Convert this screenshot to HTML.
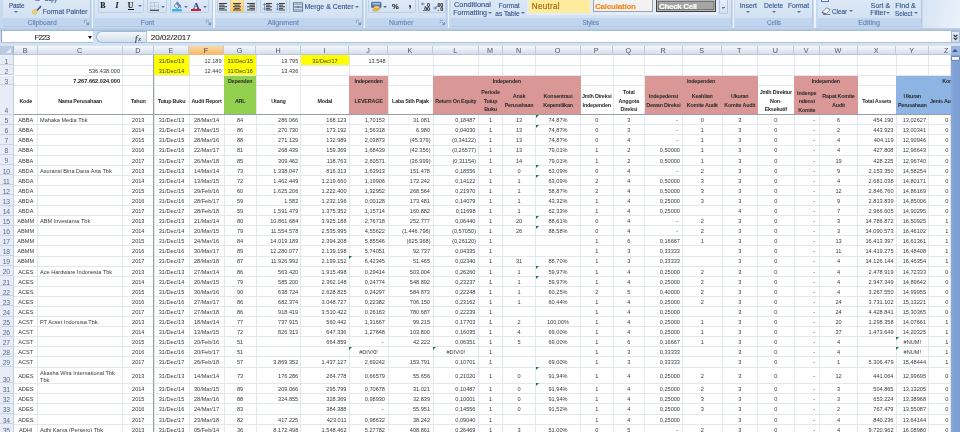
<!DOCTYPE html>
<html><head><meta charset="utf-8"><title>Excel</title>
<style>
html,body{margin:0;padding:0;background:#fff}
body{width:960px;height:432px;overflow:hidden;font-family:"Liberation Sans",sans-serif}
#app{position:relative;width:960px;height:432px;overflow:hidden;background:#fff}
#grid{position:absolute;left:0;top:0;width:960px;height:432px;overflow:hidden}
#grid>div{position:absolute}
.vl{top:55px;width:1px;height:380px;background:#e3e7ef}
.hl{left:14px;width:937px;height:1px;background:#e3e7ef}
.fz{background:#9a9ea6}
.t,.h{display:flex;align-items:center;font-size:5.6px;line-height:6px;color:#3a3a3a;white-space:nowrap;box-sizing:border-box;padding:0 2px 0 2px}
.t.c{justify-content:center}.t.l{justify-content:flex-start;padding-left:2.5px}.t.r{justify-content:flex-end;padding-right:2.5px}
.t.b{font-weight:bold;color:#222}
.t.wrap{white-space:normal;line-height:7.5px;padding-top:3px}
.h{align-items:center;justify-content:center;text-align:center;font-weight:bold;color:#2a2a2a;padding:1.8px 0 0 0;line-height:8.5px;font-size:5.4px;letter-spacing:-0.2px}
.tri{width:0;height:0;border-top:3.6px solid #1e7b34;border-right:3.6px solid transparent}
.chbar{left:0;background:linear-gradient(#f6f9fc,#e4eaf3 55%,#d6deeb);border-bottom:1px solid #b6c6dc;box-sizing:border-box}
.ch{display:flex;align-items:center;justify-content:center;font-size:7.2px;color:#4a5568;border-right:1px solid #bccadf;box-sizing:border-box}
.ch.sel{background:linear-gradient(#f9d9a6,#f3b765);color:#3a3a3a}
.corner{background:#b9cbe3;border-right:1px solid #9eb6ce;box-sizing:border-box}
.corner i{position:absolute;right:2px;bottom:2px;width:0;height:0;border-bottom:5px solid #e9eff7;border-left:5px solid transparent}
.rh{background:#e6edf7;border-right:1px solid #c0cee2;border-bottom:1px solid #c9d5e6;box-sizing:border-box;display:flex;align-items:flex-end;justify-content:center;font-size:6.8px;letter-spacing:-0.35px;line-height:6.2px;color:#5f6b82;padding-bottom:0;padding-right:0.5px}
#ribbon{position:absolute;left:0;top:0;width:960px;height:30.6px;overflow:hidden;background:linear-gradient(#c9dbf0,#c4d7ee 26.8px,#c6d8ee 27.2px,#b9cde7 29px,#a6bddb 30.6px)}
#ribbon:before{content:"";position:absolute;left:922.5px;top:0;width:38px;height:27.6px;background:linear-gradient(100deg,#d6e4f4,#ecf2fa)}
#ribbon>*, #fbar>*{position:absolute}
#fbar{position:absolute;left:0;top:0;width:960px;height:45.6px;}
#fbar:before{content:"";position:absolute;left:0;top:30.6px;width:960px;height:15px;background:linear-gradient(#c9dbf0,#d5e3f3)}
.grp{top:-3px;height:30px;box-sizing:border-box;border:1px solid #b4c9e5;border-left-color:#c9daef;border-radius:2.5px;background:linear-gradient(#dce8f5,#d3e2f3 20px);overflow:hidden}
.sep{top:0;width:1.4px;height:27.6px;background:linear-gradient(#f4f8fc,#eaf1fa)}
.gl{position:absolute;left:0;right:0;top:20.2px;bottom:0;background:#c1d6ee}
.rt{white-space:nowrap;display:block}
.ar{width:0;height:0;border-left:1.6px solid transparent;border-right:1.6px solid transparent;border-left-style:solid;border-right-style:solid;border-left-color:transparent;border-right-color:transparent}
.abs{position:absolute;overflow:visible}
.pill{left:95.5px;top:31.3px;width:50.5px;height:11.5px;border:1px solid #a3b8d6;border-right:none;border-radius:6px 0 0 6px;background:linear-gradient(#f3f7fc,#d2dfef);box-sizing:border-box}
.sb i{position:absolute;left:1.6px;top:3.6px;width:0;height:0;border-left:3px solid transparent;border-right:3px solid transparent;border-bottom:3px solid #3c5a92}
.rt{-webkit-text-stroke:0.12px currentColor}
#grid,#ribbon,#fbar{will-change:transform}
.t span{position:relative;top:0.4px}
.rh span{position:relative;top:0.5px}

</style></head><body>
<div id="app">
<div id="ribbon">
<div class="grp" style="left:2px;width:89px"><div class="gl"></div></div>
<span class="rt" style="left:27.60px;top:18.92px;font-size:6.82px;line-height:7.84px;letter-spacing:0.001px;color:#6183b8;">Clipboard</span>
<div class="sep" style="left:91.9px"></div>
<svg class="abs" style="left:84px;top:19.5px" width="5" height="5" viewBox="0 0 5 5"><path d="M0.3 3V0.3H3" fill="none" stroke="#7a93b8" stroke-width="0.7"/><path d="M2 2L4.4 4.4M4.6 2.4V4.6H2.4" fill="none" stroke="#5f7ba6" stroke-width="0.8"/></svg>
<div class="grp" style="left:94px;width:118.5px"><div class="gl"></div></div>
<span class="rt" style="left:140.80px;top:19.03px;font-size:6.7px;line-height:7.70px;letter-spacing:-0.002px;color:#6183b8;">Font</span>
<div class="sep" style="left:213.4px"></div>
<svg class="abs" style="left:205.5px;top:19.5px" width="5" height="5" viewBox="0 0 5 5"><path d="M0.3 3V0.3H3" fill="none" stroke="#7a93b8" stroke-width="0.7"/><path d="M2 2L4.4 4.4M4.6 2.4V4.6H2.4" fill="none" stroke="#5f7ba6" stroke-width="0.8"/></svg>
<div class="grp" style="left:214.5px;width:148.5px"><div class="gl"></div></div>
<span class="rt" style="left:267.50px;top:18.68px;font-size:7.08px;line-height:8.14px;letter-spacing:0.002px;color:#6183b8;">Alignment</span>
<div class="sep" style="left:363.9px"></div>
<svg class="abs" style="left:356px;top:19.5px" width="5" height="5" viewBox="0 0 5 5"><path d="M0.3 3V0.3H3" fill="none" stroke="#7a93b8" stroke-width="0.7"/><path d="M2 2L4.4 4.4M4.6 2.4V4.6H2.4" fill="none" stroke="#5f7ba6" stroke-width="0.8"/></svg>
<div class="grp" style="left:366px;width:81px"><div class="gl"></div></div>
<span class="rt" style="left:389.00px;top:18.91px;font-size:6.83px;line-height:7.85px;letter-spacing:0.002px;color:#6183b8;">Number</span>
<div class="sep" style="left:447.9px"></div>
<svg class="abs" style="left:440px;top:19.5px" width="5" height="5" viewBox="0 0 5 5"><path d="M0.3 3V0.3H3" fill="none" stroke="#7a93b8" stroke-width="0.7"/><path d="M2 2L4.4 4.4M4.6 2.4V4.6H2.4" fill="none" stroke="#5f7ba6" stroke-width="0.8"/></svg>
<div class="grp" style="left:450px;width:281.70000000000005px"><div class="gl"></div></div>
<span class="rt" style="left:582.50px;top:19.39px;font-size:6.3px;line-height:7.24px;letter-spacing:-0.131px;color:#6183b8;">Styles</span>
<div class="sep" style="left:732.6px"></div>
<div class="grp" style="left:734px;width:79.29999999999995px"><div class="gl"></div></div>
<span class="rt" style="left:767.00px;top:19.39px;font-size:6.3px;line-height:7.24px;letter-spacing:-0.001px;color:#6183b8;">Cells</span>
<div class="sep" style="left:814.1999999999999px"></div>
<div class="grp" style="left:816.5px;width:105.20000000000005px"><div class="gl"></div></div>
<span class="rt" style="left:858.30px;top:18.66px;font-size:7.1px;line-height:8.16px;letter-spacing:-0.002px;color:#6183b8;">Editing</span>
<span class="rt" style="left:8.90px;top:2.19px;font-size:6.3px;line-height:7.24px;letter-spacing:-0.127px;color:#35548a;">Paste</span>
<i class="ar" style="left:14.20px;top:10.60px;border-left-width:2.10px;border-right-width:2.10px;border-top:2.3px solid #56739f"></i>
<span class="rt" style="left:44.00px;top:-5.31px;font-size:6.3px;line-height:7.24px;letter-spacing:-0.402px;color:#35548a;">Copy</span>
<div style="left:35.00px;top:-1.00px;width:5.00px;height:2.20px;background:#6f8fc0;border-radius:0 0 1px 1px"></div>
<span class="rt" style="left:42.70px;top:7.66px;font-size:6.77px;line-height:7.79px;letter-spacing:0.002px;color:#35548a;">Format Painter</span>
<svg class="abs" style="left:31px;top:6px" width="11" height="9" viewBox="0 0 11 9"><path d="M9.6 0.6L6.2 4.2" stroke="#4a5f85" stroke-width="1.6" stroke-linecap="round"/><path d="M1.2 5.2L4.3 3.3L6.9 5.4L4.2 8.4Q2.2 8.3 1.2 5.2Z" fill="#f3d46b" stroke="#c9a437" stroke-width="0.5"/></svg>
<div style="left:97.50px;top:-2.00px;width:46.70px;height:14.60px;background:linear-gradient(#e1ebf7,#d3e1f2);border:1px solid #bdd0e9;border-radius:2px;box-sizing:border-box"></div>
<div style="left:147.00px;top:-2.00px;width:20.20px;height:14.60px;background:linear-gradient(#e1ebf7,#d3e1f2);border:1px solid #bdd0e9;border-radius:2px;box-sizing:border-box"></div>
<div style="left:170.00px;top:-2.00px;width:39.30px;height:14.60px;background:linear-gradient(#e1ebf7,#d3e1f2);border:1px solid #bdd0e9;border-radius:2px;box-sizing:border-box"></div>
<span class="rt" style="left:100.20px;top:1.88px;font-size:7.8px;line-height:8.97px;letter-spacing:0.597px;color:#1b1b1b;font-weight:bold;font-family:'Liberation Serif',serif;">B</span>
<span class="rt" style="left:115.50px;top:1.88px;font-size:7.8px;line-height:8.97px;letter-spacing:0.465px;color:#1b1b1b;font-weight:bold;font-style:italic;font-family:'Liberation Serif',serif;">I</span>
<span class="rt" style="left:127.80px;top:1.87px;font-size:7.6px;line-height:8.74px;letter-spacing:0.711px;color:#1b1b1b;font-weight:bold;font-family:'Liberation Serif',serif;">U</span>
<div style="left:127.80px;top:8.70px;width:6.40px;height:0.80px;background:#1b1b1b"></div>
<i class="ar" style="left:138.40px;top:4.90px;border-left-width:2.10px;border-right-width:2.10px;border-top:2.3px solid #56739f"></i>
<svg class="abs" style="left:149.5px;top:2px" width="9" height="9" viewBox="0 0 9 9"><path d="M0.5 0.5H8.5V8M0.5 0.5V8M4.5 0.5V8M0.5 4.2H8.5" fill="none" stroke="#8296b5" stroke-width="0.6" stroke-dasharray="1 0.8"/><path d="M0 8.3H9" stroke="#333" stroke-width="1.1"/></svg>
<i class="ar" style="left:161.20px;top:5.60px;border-left-width:2.10px;border-right-width:2.10px;border-top:2.3px solid #56739f"></i>
<svg class="abs" style="left:171.5px;top:0.5px" width="11" height="11" viewBox="0 0 11 11"><path d="M2 4.6L5.4 1.6L8.6 4.8L5.2 7.6Z" fill="#e9eff8" stroke="#50648c" stroke-width="0.8"/><path d="M5.4 1.6L8.6 4.8L6.8 6.3L4 3Z" fill="#6d87b8"/><path d="M8.5 4.6Q10 6.6 8.9 7.6Q7.6 6.8 8.5 4.6Z" fill="#3c6dbb"/><path d="M4.4 1.6Q5.2 -0.4 6.2 2.2" fill="none" stroke="#50648c" stroke-width="0.7"/><rect x="0.2" y="8.1" width="9.6" height="2.3" fill="#27b3e4"/></svg>
<i class="ar" style="left:183.90px;top:5.60px;border-left-width:2.10px;border-right-width:2.10px;border-top:2.3px solid #56739f"></i>
<span class="rt" style="left:193.00px;top:0.89px;font-size:9.0px;line-height:10.35px;letter-spacing:0.100px;color:#27468a;font-weight:bold;font-family:'Liberation Serif',serif;">A</span>
<div style="left:190.80px;top:8.80px;width:10.40px;height:2.00px;background:#d3222a"></div>
<i class="ar" style="left:203.40px;top:5.60px;border-left-width:2.10px;border-right-width:2.10px;border-top:2.3px solid #56739f"></i>
<div style="left:216.70px;top:-2.00px;width:40.30px;height:15.00px;background:linear-gradient(#e1ebf7,#d3e1f2);border:1px solid #bdd0e9;border-radius:2px;box-sizing:border-box"></div>
<div style="left:260.00px;top:-2.00px;width:26.70px;height:15.00px;background:linear-gradient(#e1ebf7,#d3e1f2);border:1px solid #bdd0e9;border-radius:2px;box-sizing:border-box"></div>
<div style="left:229.60px;top:-1.00px;width:14.40px;height:13.20px;background:linear-gradient(#fde3a6,#fbcb6e);border:1px solid #f3cd86;box-sizing:border-box"></div>
<svg class="abs" style="left:219.3px;top:3.1px" width="8.00" height="7.48" viewBox="0 0 8.00 7.48"><path d="M0.00 0.50H8.00M0.00 2.12H5.60M0.00 3.74H8.00M0.00 5.36H5.60M0.00 6.98H8.00" stroke="#3a3a3a" stroke-width="1.0" fill="none"/></svg>
<svg class="abs" style="left:232.8px;top:3.1px" width="8.00" height="7.48" viewBox="0 0 8.00 7.48"><path d="M0.00 0.50H8.00M1.20 2.12H6.80M0.00 3.74H8.00M1.20 5.36H6.80M0.00 6.98H8.00" stroke="#3a3a3a" stroke-width="1.0" fill="none"/></svg>
<svg class="abs" style="left:246.6px;top:3.1px" width="8.00" height="7.48" viewBox="0 0 8.00 7.48"><path d="M0.00 0.50H8.00M2.40 2.12H8.00M0.00 3.74H8.00M2.40 5.36H8.00M0.00 6.98H8.00" stroke="#3a3a3a" stroke-width="1.0" fill="none"/></svg>
<svg class="abs" style="left:265.7px;top:3.1px" width="6.00" height="7.48" viewBox="0 0 6.00 7.48"><path d="M0.00 0.50H6.00M0.00 2.12H4.20M0.00 3.74H6.00M0.00 5.36H4.20M0.00 6.98H6.00" stroke="#3a3a3a" stroke-width="1.0" fill="none"/></svg>
<svg class="abs" style="left:262.7px;top:2.8px" width="3.2" height="7.6" viewBox="0 0 3.2 7.6"><path d="M1.6 0.4V7.2" stroke="#4a72bd" stroke-width="0.8"/><path d="M0.3 2L1.6 0.4L2.9 2M0.3 5.6L1.6 7.2L2.9 5.6" fill="none" stroke="#4a72bd" stroke-width="0.7"/></svg>
<svg class="abs" style="left:278.59999999999997px;top:3.1px" width="6.00" height="7.48" viewBox="0 0 6.00 7.48"><path d="M0.00 0.50H6.00M0.00 2.12H4.20M0.00 3.74H6.00M0.00 5.36H4.20M0.00 6.98H6.00" stroke="#3a3a3a" stroke-width="1.0" fill="none"/></svg>
<svg class="abs" style="left:275.59999999999997px;top:2.8px" width="3.2" height="7.6" viewBox="0 0 3.2 7.6"><path d="M1.6 0.4V7.2" stroke="#4a72bd" stroke-width="0.8"/><path d="M0.3 2L1.6 0.4L2.9 2M0.3 5.6L1.6 7.2L2.9 5.6" fill="none" stroke="#4a72bd" stroke-width="0.7"/></svg>
<div style="left:289.30px;top:0.00px;width:0.70px;height:13.00px;background:#b9cbe4"></div>
<svg class="abs" style="left:292.5px;top:1.5px" width="10" height="10" viewBox="0 0 10 10"><rect x="0.4" y="0.8" width="9.2" height="8.4" fill="#d9e0ec" stroke="#5f7091" stroke-width="0.9"/><path d="M0.4 2.6H9.6M0.4 7.4H9.6M3.3 0.4V2.6M6.6 0.4V2.6M3.3 7.4V9.6M6.6 7.4V9.6" stroke="#7f90ae" stroke-width="0.6"/><path d="M1.2 5H4M8.8 5H6" stroke="#2f5bb0" stroke-width="1.1"/><text x="5" y="6.3" font-size="3.6" font-weight="bold" text-anchor="middle" fill="#333" font-family="Liberation Sans, sans-serif">a</text></svg>
<span class="rt" style="left:304.60px;top:3.11px;font-size:6.93px;line-height:7.97px;letter-spacing:-0.001px;color:#35548a;">Merge &amp; Center</span>
<i class="ar" style="left:355.20px;top:5.60px;border-left-width:2.10px;border-right-width:2.10px;border-top:2.3px solid #56739f"></i>
<div style="left:368.30px;top:-2.00px;width:47.70px;height:14.60px;background:linear-gradient(#e1ebf7,#d3e1f2);border:1px solid #bdd0e9;border-radius:2px;box-sizing:border-box"></div>
<div style="left:418.30px;top:-2.00px;width:27.70px;height:14.60px;background:linear-gradient(#e1ebf7,#d3e1f2);border:1px solid #bdd0e9;border-radius:2px;box-sizing:border-box"></div>
<svg class="abs" style="left:370.5px;top:0.5px" width="11" height="11" viewBox="0 0 11 11"><rect x="0.6" y="1.2" width="9.4" height="5.4" rx="0.5" fill="#5b7bb4" stroke="#3c598f" stroke-width="0.7"/><rect x="1.6" y="2.3" width="7.4" height="1.1" fill="#cfdcf0"/><ellipse cx="6.2" cy="7.7" rx="3" ry="1.3" fill="#f1c644" stroke="#b48a1e" stroke-width="0.4"/><ellipse cx="5.6" cy="6.4" rx="3" ry="1.3" fill="#f6d566" stroke="#b48a1e" stroke-width="0.4"/><ellipse cx="4.2" cy="9" rx="2.6" ry="1.2" fill="#f1c644" stroke="#b48a1e" stroke-width="0.4"/></svg>
<i class="ar" style="left:382.90px;top:5.60px;border-left-width:2.10px;border-right-width:2.10px;border-top:2.3px solid #56739f"></i>
<span class="rt" style="left:392.00px;top:3.30px;font-size:7.6px;line-height:8.74px;letter-spacing:0.542px;color:#2b2b2b;font-weight:bold;">%</span>
<span class="rt" style="left:408.40px;top:-2.64px;font-size:11px;line-height:12.65px;letter-spacing:-0.656px;color:#222;font-weight:bold;">,</span>
<span class="rt" style="left:424.40px;top:1.82px;font-size:5.3px;line-height:6.09px;letter-spacing:1.180px;color:#222;font-weight:bold;">.0</span>
<span class="rt" style="left:423.00px;top:6.22px;font-size:5.3px;line-height:6.09px;letter-spacing:-0.184px;color:#222;font-weight:bold;">.00</span>
<svg class="abs" style="left:420.8px;top:1.6px" width="4" height="4" viewBox="0 0 4 4"><path d="M3.6 2H0.8M2 0.6L0.6 2L2 3.4" fill="none" stroke="#2f62c0" stroke-width="0.8"/></svg>
<span class="rt" style="left:436.20px;top:1.82px;font-size:5.3px;line-height:6.09px;letter-spacing:-0.184px;color:#222;font-weight:bold;">.00</span>
<span class="rt" style="left:437.60px;top:6.22px;font-size:5.3px;line-height:6.09px;letter-spacing:1.180px;color:#222;font-weight:bold;">.0</span>
<svg class="abs" style="left:433.4px;top:6.2px" width="4" height="4" viewBox="0 0 4 4"><path d="M0.4 2H3.2M2 0.6L3.4 2L2 3.4" fill="none" stroke="#2f62c0" stroke-width="0.8"/></svg>
<span class="rt" style="left:454.00px;top:1.09px;font-size:7.39px;line-height:8.50px;letter-spacing:0.002px;color:#35548a;">Conditional</span>
<span class="rt" style="left:453.30px;top:9.10px;font-size:7.05px;line-height:8.11px;letter-spacing:0.001px;color:#35548a;">Formatting</span>
<i class="ar" style="left:488.40px;top:11.60px;border-left-width:2.10px;border-right-width:2.10px;border-top:2.3px solid #56739f"></i>
<span class="rt" style="left:498.70px;top:1.79px;font-size:6.63px;line-height:7.62px;letter-spacing:0.001px;color:#35548a;">Format</span>
<span class="rt" style="left:495.30px;top:9.54px;font-size:6.58px;line-height:7.57px;letter-spacing:0.002px;color:#35548a;">as Table</span>
<i class="ar" style="left:520.50px;top:11.60px;border-left-width:2.10px;border-right-width:2.10px;border-top:2.3px solid #56739f"></i>
<div style="left:526.50px;top:-1.00px;width:191.50px;height:15.50px;background:#e3ecf8;"></div>
<div style="left:529.00px;top:-1.00px;width:60.60px;height:13.50px;background:#ffeb9c"></div>
<span class="rt" style="left:531.80px;top:1.74px;font-size:8.2px;line-height:9.43px;letter-spacing:0.244px;color:#9c6500;">Neutral</span>
<div style="left:592.50px;top:-1.00px;width:60.30px;height:13.40px;background:#f2f2f2;border:1px solid #a0a0a0;box-sizing:border-box"></div>
<span class="rt" style="left:595.00px;top:1.93px;font-size:8.0px;line-height:9.20px;letter-spacing:-0.212px;color:#f6861a;font-weight:bold;">Calculation</span>
<div style="left:656.30px;top:-1.00px;width:59.70px;height:13.20px;background:#a5a5a5;border:1px solid #3f3f3f;box-shadow:inset 0 0 0 0.7px #d8d8d8, inset 0 0 0 1.4px #4a4a4a;box-sizing:border-box"></div>
<span class="rt" style="left:659.00px;top:1.93px;font-size:8.0px;line-height:9.20px;letter-spacing:-0.323px;color:#ffffff;font-weight:bold;">Check Cell</span>
<div style="left:719.00px;top:-1.00px;width:8.60px;height:15.20px;background:linear-gradient(#e6eef9,#d3e1f3);border:1px solid #b3c8e4;border-radius:0 0 2px 0;box-sizing:border-box"></div>
<div style="left:721.60px;top:6.60px;width:3.40px;height:0.70px;background:#5d79a6"></div>
<i class="ar" style="left:721.60px;top:8.30px;border-left-width:1.70px;border-right-width:1.70px;border-top:1.8px solid #56739f"></i>
<span class="rt" style="left:739.70px;top:1.82px;font-size:6.92px;line-height:7.96px;letter-spacing:-0.001px;color:#35548a;">Insert</span>
<i class="ar" style="left:746.20px;top:11.20px;border-left-width:2.10px;border-right-width:2.10px;border-top:2.3px solid #56739f"></i>
<span class="rt" style="left:764.00px;top:2.04px;font-size:6.68px;line-height:7.68px;letter-spacing:-0.002px;color:#35548a;">Delete</span>
<i class="ar" style="left:771.50px;top:11.20px;border-left-width:2.10px;border-right-width:2.10px;border-top:2.3px solid #56739f"></i>
<span class="rt" style="left:788.00px;top:2.09px;font-size:6.63px;line-height:7.62px;letter-spacing:0.001px;color:#35548a;">Format</span>
<i class="ar" style="left:796.90px;top:11.20px;border-left-width:2.10px;border-right-width:2.10px;border-top:2.3px solid #56739f"></i>
<div style="left:821.00px;top:-1.00px;width:8.00px;height:3.00px;background:#f1f5fb;border:1px solid #5873a3;box-sizing:border-box"></div>
<svg class="abs" style="left:820.5px;top:6.5px" width="11" height="8" viewBox="0 0 11 8"><path d="M1 5.4L5.6 0.8L9.2 2.6L5 6.8Z" fill="#fafcff" stroke="#4b4f66" stroke-width="0.7"/><path d="M1 5.4L2.8 7H5L5 6.8Z" fill="#d9a0b0" stroke="#4b4f66" stroke-width="0.5"/><path d="M2 7.5H9.5" stroke="#55597a" stroke-width="0.7"/></svg>
<span class="rt" style="left:832.00px;top:8.09px;font-size:6.3px;line-height:7.24px;letter-spacing:-0.014px;color:#35548a;">Clear</span>
<i class="ar" style="left:848.90px;top:10.00px;border-left-width:2.10px;border-right-width:2.10px;border-top:2.3px solid #56739f"></i>
<span class="rt" style="left:870.80px;top:1.83px;font-size:6.91px;line-height:7.95px;letter-spacing:-0.000px;color:#35548a;">Sort &amp;</span>
<span class="rt" style="left:870.30px;top:9.17px;font-size:6.98px;line-height:8.03px;letter-spacing:-0.002px;color:#35548a;">Filter</span>
<i class="ar" style="left:886.30px;top:11.60px;border-left-width:2.10px;border-right-width:2.10px;border-top:2.3px solid #56739f"></i>
<span class="rt" style="left:895.30px;top:1.67px;font-size:7.09px;line-height:8.15px;letter-spacing:0.002px;color:#35548a;">Find &amp;</span>
<span class="rt" style="left:895.00px;top:9.79px;font-size:6.3px;line-height:7.24px;letter-spacing:-0.002px;color:#35548a;">Select</span>
<i class="ar" style="left:913.50px;top:11.60px;border-left-width:2.10px;border-right-width:2.10px;border-top:2.3px solid #56739f"></i>
</div>
<div id="fbar">
<div style="left:0.50px;top:30.80px;width:92.50px;height:12.40px;background:#fff;border-left:0.8px solid #97a6bd;border-bottom:0.7px solid #b3c1d6;box-sizing:border-box"></div>
<span class="rt" style="left:34.40px;top:33.71px;font-size:7.8px;line-height:8.97px;letter-spacing:-0.726px;color:#2b2b2b;">F223</span>
<i class="ar" style="left:87.50px;top:35.90px;border-left-width:2.50px;border-right-width:2.50px;border-top:3px solid #111"></i>
<div class="pill"></div>
<div style="left:100.00px;top:35.40px;width:3.00px;height:2.80px;border-radius:50%;background:radial-gradient(circle at 40% 35%,#ffffff,#c3cfe0 70%,#9fb0c9);"></div>
<span class="rt" style="left:135.00px;top:32.51px;font-size:9.2px;line-height:10.58px;letter-spacing:0.444px;color:#3a3a3a;font-style:italic;font-family:'Liberation Serif',serif;">f</span>
<span class="rt" style="left:138.20px;top:35.82px;font-size:6.0px;line-height:6.90px;letter-spacing:0.337px;color:#3a3a3a;font-style:italic;font-family:'Liberation Serif',serif;">x</span>
<div style="left:146.00px;top:30.80px;width:804.60px;height:12.40px;background:#fff;border-left:1px solid #b4c6de;border-bottom:0.7px solid #b3c1d6;box-sizing:border-box"></div>
<span class="rt" style="left:150.80px;top:33.44px;font-size:8.1px;line-height:9.31px;letter-spacing:-0.060px;color:#2b2b2b;">20/02/2017</span>
<div style="left:950.60px;top:30.90px;width:9.40px;height:12.30px;background:linear-gradient(#e3ecf8,#cfdef0);border:1px solid #a5bad6;box-sizing:border-box"></div>
<svg class="abs" style="left:953px;top:34px" width="5" height="7" viewBox="0 0 5 7"><path d="M0.6 0.8L2.5 2.7L4.4 0.8M0.6 3.6L2.5 5.5L4.4 3.6" fill="none" stroke="#2a2a2a" stroke-width="1.05"/></svg>
</div>
<div id="grid">
<div class="vl" style="left:37.00px"></div>
<div class="vl" style="left:122.00px"></div>
<div class="vl" style="left:153.50px"></div>
<div class="vl" style="left:188.50px"></div>
<div class="vl" style="left:223.50px"></div>
<div class="vl" style="left:255.75px"></div>
<div class="vl" style="left:300.25px"></div>
<div class="vl" style="left:348.50px"></div>
<div class="vl" style="left:387.50px"></div>
<div class="vl" style="left:432.50px"></div>
<div class="vl" style="left:478.00px"></div>
<div class="vl" style="left:502.00px"></div>
<div class="vl" style="left:535.00px"></div>
<div class="vl" style="left:580.00px"></div>
<div class="vl" style="left:612.50px"></div>
<div class="vl" style="left:644.00px"></div>
<div class="vl" style="left:682.00px"></div>
<div class="vl" style="left:721.50px"></div>
<div class="vl" style="left:757.00px"></div>
<div class="vl" style="left:793.50px"></div>
<div class="vl" style="left:819.00px"></div>
<div class="vl" style="left:857.00px"></div>
<div class="vl" style="left:895.50px"></div>
<div class="vl" style="left:928.00px"></div>
<div class="vl" style="left:950.30px"></div>
<div class="hl" style="top:64.90px"></div>
<div class="hl" style="top:75.00px"></div>
<div class="hl" style="top:84.90px"></div>
<div class="hl" style="top:114.25px"></div>
<div class="hl" style="top:124.34px"></div>
<div class="hl" style="top:134.43px"></div>
<div class="hl" style="top:144.52px"></div>
<div class="hl" style="top:154.61px"></div>
<div class="hl" style="top:164.70px"></div>
<div class="hl" style="top:174.79px"></div>
<div class="hl" style="top:184.88px"></div>
<div class="hl" style="top:194.97px"></div>
<div class="hl" style="top:205.06px"></div>
<div class="hl" style="top:215.15px"></div>
<div class="hl" style="top:225.24px"></div>
<div class="hl" style="top:235.33px"></div>
<div class="hl" style="top:245.42px"></div>
<div class="hl" style="top:255.51px"></div>
<div class="hl" style="top:265.60px"></div>
<div class="hl" style="top:275.69px"></div>
<div class="hl" style="top:285.78px"></div>
<div class="hl" style="top:295.87px"></div>
<div class="hl" style="top:305.96px"></div>
<div class="hl" style="top:316.05px"></div>
<div class="hl" style="top:326.14px"></div>
<div class="hl" style="top:336.23px"></div>
<div class="hl" style="top:346.32px"></div>
<div class="hl" style="top:356.41px"></div>
<div class="hl" style="top:366.50px"></div>
<div class="hl" style="top:382.80px"></div>
<div class="hl" style="top:393.07px"></div>
<div class="hl" style="top:403.34px"></div>
<div class="hl" style="top:413.61px"></div>
<div class="hl" style="top:423.88px"></div>
<div class="f" style="left:154.00px;top:55.10px;width:35.00px;height:20.40px;background:#ffff00;"></div>
<div class="f" style="left:224.00px;top:55.10px;width:32.25px;height:20.40px;background:#ffff00;"></div>
<div class="f" style="left:300.75px;top:55.10px;width:48.25px;height:10.30px;background:#ffff00;"></div>
<div class="f" style="left:224.00px;top:75.50px;width:32.25px;height:39.25px;background:#92d050;"></div>
<div class="f" style="left:349.00px;top:75.50px;width:39.00px;height:39.25px;background:#d99795;"></div>
<div class="f" style="left:433.00px;top:75.50px;width:147.50px;height:39.25px;background:#d99795;"></div>
<div class="f" style="left:644.50px;top:75.50px;width:113.00px;height:39.25px;background:#d99795;"></div>
<div class="f" style="left:794.00px;top:75.50px;width:63.50px;height:39.25px;background:#d99795;"></div>
<div class="f" style="left:896.00px;top:75.50px;width:54.80px;height:39.25px;background:#8db4e3;"></div>
<div class="fz" style="left:153.40px;top:55.10px;width:1px;height:400px"></div>
<div class="fz" style="left:0;top:114.15px;width:950.80px;height:1px"></div>
<div class="t c" style="left:154.00px;top:55.10px;width:35.00px;height:10.30px;"><span>31/Dec/13</span></div>
<div class="t r" style="left:189.00px;top:55.10px;width:35.00px;height:10.30px;"><span>12.189</span></div>
<div class="t c" style="left:224.00px;top:55.10px;width:32.25px;height:10.30px;"><span>31/Dec/15</span></div>
<div class="t r" style="left:256.25px;top:55.10px;width:44.50px;height:10.30px;"><span>13.795</span></div>
<div class="t c" style="left:300.75px;top:55.10px;width:48.25px;height:10.30px;"><span>31/Dec/17</span></div>
<div class="t r" style="left:349.00px;top:55.10px;width:39.00px;height:10.30px;"><span>13.548</span></div>
<div class="t c" style="left:154.00px;top:65.40px;width:35.00px;height:10.10px;"><span>31/Dec/14</span></div>
<div class="t r" style="left:189.00px;top:65.40px;width:35.00px;height:10.10px;"><span>12.440</span></div>
<div class="t c" style="left:224.00px;top:65.40px;width:32.25px;height:10.10px;"><span>31/Dec/16</span></div>
<div class="t r" style="left:256.25px;top:65.40px;width:44.50px;height:10.10px;"><span>13.436</span></div>
<div class="t r" style="left:37.50px;top:65.40px;width:85.00px;height:10.10px;"><span>536.438.000</span></div>
<div class="t b r" style="left:37.50px;top:75.50px;width:85.00px;height:9.90px;"><span>7.267.662.024.000</span></div>
<div class="h" style="left:224.00px;top:75.50px;width:32.25px;height:9.90px;"><span>Dependen</span></div>
<div class="h" style="left:349.00px;top:75.50px;width:39.00px;height:9.90px;"><span>Independen</span></div>
<div class="h" style="left:433.00px;top:75.50px;width:147.50px;height:9.90px;"><span>Independen</span></div>
<div class="h" style="left:644.50px;top:75.50px;width:113.00px;height:9.90px;"><span>Independen</span></div>
<div class="h" style="left:794.00px;top:75.50px;width:63.50px;height:9.90px;"><span>Independen</span></div>
<div class="h" style="left:926.50px;top:75.50px;width:24.30px;height:9.90px;justify-content:flex-end;overflow:hidden"><span style="margin-right:-3px">Kont</span></div>
<div class="h" style="left:14.00px;top:85.40px;width:23.50px;height:29.35px;overflow:hidden;"><span>Kode</span></div>
<div class="h" style="left:37.50px;top:85.40px;width:85.00px;height:29.35px;overflow:hidden;"><span>Nama Perusahaan</span></div>
<div class="h" style="left:122.50px;top:85.40px;width:31.50px;height:29.35px;overflow:hidden;"><span>Tahun</span></div>
<div class="h" style="left:154.00px;top:85.40px;width:35.00px;height:29.35px;overflow:hidden;"><span>Tutup Buku</span></div>
<div class="h" style="left:189.00px;top:85.40px;width:35.00px;height:29.35px;overflow:hidden;"><span>Audit Report</span></div>
<div class="h" style="left:224.00px;top:85.40px;width:32.25px;height:29.35px;overflow:hidden;"><span>ARL</span></div>
<div class="h" style="left:256.25px;top:85.40px;width:44.50px;height:29.35px;overflow:hidden;"><span>Utang</span></div>
<div class="h" style="left:300.75px;top:85.40px;width:48.25px;height:29.35px;overflow:hidden;"><span>Modal</span></div>
<div class="h" style="left:349.00px;top:85.40px;width:39.00px;height:29.35px;overflow:hidden;"><span>LEVERAGE</span></div>
<div class="h" style="left:388.00px;top:85.40px;width:45.00px;height:29.35px;overflow:hidden;"><span>Laba Stlh Pajak</span></div>
<div class="h" style="left:433.00px;top:85.40px;width:45.50px;height:29.35px;overflow:hidden;"><span>Return On Equity</span></div>
<div class="h" style="left:478.50px;top:85.40px;width:24.00px;height:29.35px;overflow:hidden;"><span>Periode<br>Tutup<br>Buku</span></div>
<div class="h" style="left:502.50px;top:85.40px;width:33.00px;height:29.35px;overflow:hidden;"><span>Anak<br>Perusahaan</span></div>
<div class="h" style="left:535.50px;top:85.40px;width:45.00px;height:29.35px;overflow:hidden;"><span>Konsentrasi<br>Kepemilikan</span></div>
<div class="h" style="left:580.50px;top:85.40px;width:32.50px;height:29.35px;overflow:hidden;"><span>Jmlh Direksi<br>Independen</span></div>
<div class="h" style="left:613.00px;top:85.40px;width:31.50px;height:29.35px;overflow:hidden;"><span>Total<br>Anggota<br>Direksi</span></div>
<div class="h" style="left:644.50px;top:85.40px;width:38.00px;height:29.35px;overflow:hidden;"><span>Indepedensi<br>Dewan Direksi</span></div>
<div class="h" style="left:682.50px;top:85.40px;width:39.50px;height:29.35px;overflow:hidden;"><span>Keahlian<br>Komite Audit</span></div>
<div class="h" style="left:722.00px;top:85.40px;width:35.50px;height:29.35px;overflow:hidden;"><span>Ukuran<br>Komite Audit</span></div>
<div class="h" style="left:757.50px;top:85.40px;width:36.50px;height:29.35px;overflow:hidden;"><span>Jmlh Direktur<br>Non-<br>Eksekutif</span></div>
<div class="h" style="left:794.00px;top:85.40px;width:25.50px;height:29.35px;overflow:hidden;align-items:flex-start;padding-top:3.6px;box-sizing:border-box;"><span>Indenpe<br>ndensi<br>Komite<br>Audit</span></div>
<div class="h" style="left:819.50px;top:85.40px;width:38.00px;height:29.35px;overflow:hidden;"><span>Rapat Komite<br>Audit</span></div>
<div class="h" style="left:857.50px;top:85.40px;width:38.50px;height:29.35px;overflow:hidden;"><span>Total Assets</span></div>
<div class="h" style="left:896.00px;top:85.40px;width:32.50px;height:29.35px;overflow:hidden;"><span>Ukuran<br>Perusahaan</span></div>
<div class="h" style="left:928.50px;top:85.40px;width:22.30px;height:29.35px;justify-content:flex-start;overflow:hidden"><span style="white-space:nowrap;margin-left:1.5px">Jenis Au</span></div>
<div class="t c" style="left:14.00px;top:114.75px;width:23.50px;height:10.09px;"><span>ABBA</span></div>
<div class="t l" style="left:37.50px;top:114.75px;width:85.00px;height:10.09px;"><span>Mahaka Media Tbk</span></div>
<div class="t c" style="left:122.50px;top:114.75px;width:31.50px;height:10.09px;"><span>2013</span></div>
<div class="t c" style="left:154.00px;top:114.75px;width:35.00px;height:10.09px;"><span>31/Dec/13</span></div>
<div class="t c" style="left:189.00px;top:114.75px;width:35.00px;height:10.09px;"><span>28/Mar/14</span></div>
<div class="t c" style="left:224.00px;top:114.75px;width:32.25px;height:10.09px;"><span>84</span></div>
<div class="t r" style="left:256.25px;top:114.75px;width:44.50px;height:10.09px;"><span>286.066</span></div>
<div class="t r" style="left:300.75px;top:114.75px;width:48.25px;height:10.09px;"><span>168.123</span></div>
<div class="t r" style="left:349.00px;top:114.75px;width:39.00px;height:10.09px;padding-right:3px;"><span>1,70153</span></div>
<div class="t r" style="left:388.00px;top:114.75px;width:45.00px;height:10.09px;padding-right:3px;"><span>31.081</span></div>
<div class="t r" style="left:433.00px;top:114.75px;width:45.50px;height:10.09px;padding-right:3px;"><span>0,18487</span></div>
<div class="t c" style="left:478.50px;top:114.75px;width:24.00px;height:10.09px;"><span>1</span></div>
<div class="t c" style="left:502.50px;top:114.75px;width:33.00px;height:10.09px;"><span>13</span></div>
<div class="t c" style="left:535.50px;top:114.75px;width:45.00px;height:10.09px;"><span>74,87%</span></div>
<div class="t c" style="left:580.50px;top:114.75px;width:32.50px;height:10.09px;"><span>0</span></div>
<div class="t c" style="left:613.00px;top:114.75px;width:31.50px;height:10.09px;"><span>3</span></div>
<div class="t r" style="left:644.50px;top:114.75px;width:38.00px;height:10.09px;padding-right:4.5px;"><span>-</span></div>
<div class="t c" style="left:682.50px;top:114.75px;width:39.50px;height:10.09px;"><span>0</span></div>
<div class="t c" style="left:722.00px;top:114.75px;width:35.50px;height:10.09px;"><span>3</span></div>
<div class="t c" style="left:757.50px;top:114.75px;width:36.50px;height:10.09px;"><span>0</span></div>
<div class="t r" style="left:794.00px;top:114.75px;width:25.50px;height:10.09px;padding-right:4.5px;"><span>-</span></div>
<div class="t c" style="left:819.50px;top:114.75px;width:38.00px;height:10.09px;"><span>6</span></div>
<div class="t r" style="left:857.50px;top:114.75px;width:38.50px;height:10.09px;"><span>454.190</span></div>
<div class="t r" style="left:896.00px;top:114.75px;width:32.50px;height:10.09px;"><span>13,02627</span></div>
<div class="t r" style="left:928.50px;top:114.75px;width:22.30px;height:10.09px;"><span>0</span></div>
<div class="t c" style="left:14.00px;top:124.84px;width:23.50px;height:10.09px;"><span>ABBA</span></div>
<div class="t c" style="left:122.50px;top:124.84px;width:31.50px;height:10.09px;"><span>2014</span></div>
<div class="t c" style="left:154.00px;top:124.84px;width:35.00px;height:10.09px;"><span>31/Dec/14</span></div>
<div class="t c" style="left:189.00px;top:124.84px;width:35.00px;height:10.09px;"><span>27/Mar/15</span></div>
<div class="t c" style="left:224.00px;top:124.84px;width:32.25px;height:10.09px;"><span>86</span></div>
<div class="t r" style="left:256.25px;top:124.84px;width:44.50px;height:10.09px;"><span>270.730</span></div>
<div class="t r" style="left:300.75px;top:124.84px;width:48.25px;height:10.09px;"><span>173.192</span></div>
<div class="t r" style="left:349.00px;top:124.84px;width:39.00px;height:10.09px;padding-right:3px;"><span>1,56318</span></div>
<div class="t r" style="left:388.00px;top:124.84px;width:45.00px;height:10.09px;padding-right:3px;"><span>6.980</span></div>
<div class="t r" style="left:433.00px;top:124.84px;width:45.50px;height:10.09px;padding-right:3px;"><span>0,04030</span></div>
<div class="t c" style="left:478.50px;top:124.84px;width:24.00px;height:10.09px;"><span>1</span></div>
<div class="t c" style="left:502.50px;top:124.84px;width:33.00px;height:10.09px;"><span>13</span></div>
<div class="t c" style="left:535.50px;top:124.84px;width:45.00px;height:10.09px;"><span>74,87%</span></div>
<div class="t c" style="left:580.50px;top:124.84px;width:32.50px;height:10.09px;"><span>0</span></div>
<div class="t c" style="left:613.00px;top:124.84px;width:31.50px;height:10.09px;"><span>3</span></div>
<div class="t r" style="left:644.50px;top:124.84px;width:38.00px;height:10.09px;padding-right:4.5px;"><span>-</span></div>
<div class="t c" style="left:682.50px;top:124.84px;width:39.50px;height:10.09px;"><span>1</span></div>
<div class="t c" style="left:722.00px;top:124.84px;width:35.50px;height:10.09px;"><span>3</span></div>
<div class="t c" style="left:757.50px;top:124.84px;width:36.50px;height:10.09px;"><span>0</span></div>
<div class="t r" style="left:794.00px;top:124.84px;width:25.50px;height:10.09px;padding-right:4.5px;"><span>-</span></div>
<div class="t c" style="left:819.50px;top:124.84px;width:38.00px;height:10.09px;"><span>2</span></div>
<div class="t r" style="left:857.50px;top:124.84px;width:38.50px;height:10.09px;"><span>443.923</span></div>
<div class="t r" style="left:896.00px;top:124.84px;width:32.50px;height:10.09px;"><span>13,00341</span></div>
<div class="t r" style="left:928.50px;top:124.84px;width:22.30px;height:10.09px;"><span>0</span></div>
<div class="t c" style="left:14.00px;top:134.93px;width:23.50px;height:10.09px;"><span>ABBA</span></div>
<div class="t c" style="left:122.50px;top:134.93px;width:31.50px;height:10.09px;"><span>2015</span></div>
<div class="t c" style="left:154.00px;top:134.93px;width:35.00px;height:10.09px;"><span>31/Dec/15</span></div>
<div class="t c" style="left:189.00px;top:134.93px;width:35.00px;height:10.09px;"><span>28/Mar/16</span></div>
<div class="t c" style="left:224.00px;top:134.93px;width:32.25px;height:10.09px;"><span>88</span></div>
<div class="t r" style="left:256.25px;top:134.93px;width:44.50px;height:10.09px;"><span>271.129</span></div>
<div class="t r" style="left:300.75px;top:134.93px;width:48.25px;height:10.09px;"><span>132.989</span></div>
<div class="t r" style="left:349.00px;top:134.93px;width:39.00px;height:10.09px;padding-right:3px;"><span>2,03873</span></div>
<div class="t r" style="left:388.00px;top:134.93px;width:45.00px;height:10.09px;"><span>(45.379)</span></div>
<div class="t r" style="left:433.00px;top:134.93px;width:45.50px;height:10.09px;"><span>(0,34122)</span></div>
<div class="t c" style="left:478.50px;top:134.93px;width:24.00px;height:10.09px;"><span>1</span></div>
<div class="t c" style="left:502.50px;top:134.93px;width:33.00px;height:10.09px;"><span>13</span></div>
<div class="t c" style="left:535.50px;top:134.93px;width:45.00px;height:10.09px;"><span>74,87%</span></div>
<div class="t c" style="left:580.50px;top:134.93px;width:32.50px;height:10.09px;"><span>0</span></div>
<div class="t c" style="left:613.00px;top:134.93px;width:31.50px;height:10.09px;"><span>4</span></div>
<div class="t r" style="left:644.50px;top:134.93px;width:38.00px;height:10.09px;padding-right:4.5px;"><span>-</span></div>
<div class="t c" style="left:682.50px;top:134.93px;width:39.50px;height:10.09px;"><span>1</span></div>
<div class="t c" style="left:722.00px;top:134.93px;width:35.50px;height:10.09px;"><span>3</span></div>
<div class="t c" style="left:757.50px;top:134.93px;width:36.50px;height:10.09px;"><span>0</span></div>
<div class="t r" style="left:794.00px;top:134.93px;width:25.50px;height:10.09px;padding-right:4.5px;"><span>-</span></div>
<div class="t c" style="left:819.50px;top:134.93px;width:38.00px;height:10.09px;"><span>4</span></div>
<div class="t r" style="left:857.50px;top:134.93px;width:38.50px;height:10.09px;"><span>404.119</span></div>
<div class="t r" style="left:896.00px;top:134.93px;width:32.50px;height:10.09px;"><span>12,90946</span></div>
<div class="t r" style="left:928.50px;top:134.93px;width:22.30px;height:10.09px;"><span>0</span></div>
<div class="t c" style="left:14.00px;top:145.02px;width:23.50px;height:10.09px;"><span>ABBA</span></div>
<div class="t c" style="left:122.50px;top:145.02px;width:31.50px;height:10.09px;"><span>2016</span></div>
<div class="t c" style="left:154.00px;top:145.02px;width:35.00px;height:10.09px;"><span>31/Dec/16</span></div>
<div class="t c" style="left:189.00px;top:145.02px;width:35.00px;height:10.09px;"><span>22/Mar/17</span></div>
<div class="t c" style="left:224.00px;top:145.02px;width:32.25px;height:10.09px;"><span>81</span></div>
<div class="t r" style="left:256.25px;top:145.02px;width:44.50px;height:10.09px;"><span>268.439</span></div>
<div class="t r" style="left:300.75px;top:145.02px;width:48.25px;height:10.09px;"><span>159.369</span></div>
<div class="t r" style="left:349.00px;top:145.02px;width:39.00px;height:10.09px;padding-right:3px;"><span>1,68439</span></div>
<div class="t r" style="left:388.00px;top:145.02px;width:45.00px;height:10.09px;"><span>(42.356)</span></div>
<div class="t r" style="left:433.00px;top:145.02px;width:45.50px;height:10.09px;"><span>(0,26577)</span></div>
<div class="t c" style="left:478.50px;top:145.02px;width:24.00px;height:10.09px;"><span>1</span></div>
<div class="t c" style="left:502.50px;top:145.02px;width:33.00px;height:10.09px;"><span>13</span></div>
<div class="t c" style="left:535.50px;top:145.02px;width:45.00px;height:10.09px;"><span>79,01%</span></div>
<div class="t c" style="left:580.50px;top:145.02px;width:32.50px;height:10.09px;"><span>1</span></div>
<div class="t c" style="left:613.00px;top:145.02px;width:31.50px;height:10.09px;"><span>2</span></div>
<div class="t r" style="left:644.50px;top:145.02px;width:38.00px;height:10.09px;"><span>0,50000</span></div>
<div class="t c" style="left:682.50px;top:145.02px;width:39.50px;height:10.09px;"><span>1</span></div>
<div class="t c" style="left:722.00px;top:145.02px;width:35.50px;height:10.09px;"><span>3</span></div>
<div class="t c" style="left:757.50px;top:145.02px;width:36.50px;height:10.09px;"><span>0</span></div>
<div class="t r" style="left:794.00px;top:145.02px;width:25.50px;height:10.09px;padding-right:4.5px;"><span>-</span></div>
<div class="t c" style="left:819.50px;top:145.02px;width:38.00px;height:10.09px;"><span>4</span></div>
<div class="t r" style="left:857.50px;top:145.02px;width:38.50px;height:10.09px;"><span>427.808</span></div>
<div class="t r" style="left:896.00px;top:145.02px;width:32.50px;height:10.09px;"><span>12,96643</span></div>
<div class="t r" style="left:928.50px;top:145.02px;width:22.30px;height:10.09px;"><span>0</span></div>
<div class="t c" style="left:14.00px;top:155.11px;width:23.50px;height:10.09px;"><span>ABBA</span></div>
<div class="t c" style="left:122.50px;top:155.11px;width:31.50px;height:10.09px;"><span>2017</span></div>
<div class="t c" style="left:154.00px;top:155.11px;width:35.00px;height:10.09px;"><span>31/Dec/17</span></div>
<div class="t c" style="left:189.00px;top:155.11px;width:35.00px;height:10.09px;"><span>26/Mar/18</span></div>
<div class="t c" style="left:224.00px;top:155.11px;width:32.25px;height:10.09px;"><span>85</span></div>
<div class="t r" style="left:256.25px;top:155.11px;width:44.50px;height:10.09px;"><span>309.462</span></div>
<div class="t r" style="left:300.75px;top:155.11px;width:48.25px;height:10.09px;"><span>118.763</span></div>
<div class="t r" style="left:349.00px;top:155.11px;width:39.00px;height:10.09px;padding-right:3px;"><span>2,60571</span></div>
<div class="t r" style="left:388.00px;top:155.11px;width:45.00px;height:10.09px;"><span>(36.999)</span></div>
<div class="t r" style="left:433.00px;top:155.11px;width:45.50px;height:10.09px;"><span>(0,31154)</span></div>
<div class="t c" style="left:478.50px;top:155.11px;width:24.00px;height:10.09px;"><span>1</span></div>
<div class="t c" style="left:502.50px;top:155.11px;width:33.00px;height:10.09px;"><span>14</span></div>
<div class="t c" style="left:535.50px;top:155.11px;width:45.00px;height:10.09px;"><span>79,01%</span></div>
<div class="t c" style="left:580.50px;top:155.11px;width:32.50px;height:10.09px;"><span>1</span></div>
<div class="t c" style="left:613.00px;top:155.11px;width:31.50px;height:10.09px;"><span>2</span></div>
<div class="t r" style="left:644.50px;top:155.11px;width:38.00px;height:10.09px;"><span>0,50000</span></div>
<div class="t c" style="left:682.50px;top:155.11px;width:39.50px;height:10.09px;"><span>1</span></div>
<div class="t c" style="left:722.00px;top:155.11px;width:35.50px;height:10.09px;"><span>3</span></div>
<div class="t c" style="left:757.50px;top:155.11px;width:36.50px;height:10.09px;"><span>0</span></div>
<div class="t r" style="left:794.00px;top:155.11px;width:25.50px;height:10.09px;padding-right:4.5px;"><span>-</span></div>
<div class="t c" style="left:819.50px;top:155.11px;width:38.00px;height:10.09px;"><span>19</span></div>
<div class="t r" style="left:857.50px;top:155.11px;width:38.50px;height:10.09px;"><span>428.225</span></div>
<div class="t r" style="left:896.00px;top:155.11px;width:32.50px;height:10.09px;"><span>12,96740</span></div>
<div class="t r" style="left:928.50px;top:155.11px;width:22.30px;height:10.09px;"><span>0</span></div>
<div class="t c" style="left:14.00px;top:165.20px;width:23.50px;height:10.09px;"><span>ABDA</span></div>
<div class="t l" style="left:37.50px;top:165.20px;width:85.00px;height:10.09px;"><span>Asuransi Bina Dana Arta Tbk</span></div>
<div class="t c" style="left:122.50px;top:165.20px;width:31.50px;height:10.09px;"><span>2013</span></div>
<div class="t c" style="left:154.00px;top:165.20px;width:35.00px;height:10.09px;"><span>31/Dec/13</span></div>
<div class="t c" style="left:189.00px;top:165.20px;width:35.00px;height:10.09px;"><span>14/Mar/14</span></div>
<div class="t c" style="left:224.00px;top:165.20px;width:32.25px;height:10.09px;"><span>73</span></div>
<div class="t r" style="left:256.25px;top:165.20px;width:44.50px;height:10.09px;"><span>1.338.047</span></div>
<div class="t r" style="left:300.75px;top:165.20px;width:48.25px;height:10.09px;"><span>816.313</span></div>
<div class="t r" style="left:349.00px;top:165.20px;width:39.00px;height:10.09px;padding-right:3px;"><span>1,63913</span></div>
<div class="t r" style="left:388.00px;top:165.20px;width:45.00px;height:10.09px;padding-right:3px;"><span>151.478</span></div>
<div class="t r" style="left:433.00px;top:165.20px;width:45.50px;height:10.09px;padding-right:3px;"><span>0,18556</span></div>
<div class="t c" style="left:478.50px;top:165.20px;width:24.00px;height:10.09px;"><span>1</span></div>
<div class="t c" style="left:502.50px;top:165.20px;width:33.00px;height:10.09px;"><span>0</span></div>
<div class="t c" style="left:535.50px;top:165.20px;width:45.00px;height:10.09px;"><span>63,09%</span></div>
<div class="t c" style="left:580.50px;top:165.20px;width:32.50px;height:10.09px;"><span>0</span></div>
<div class="t c" style="left:613.00px;top:165.20px;width:31.50px;height:10.09px;"><span>4</span></div>
<div class="t r" style="left:644.50px;top:165.20px;width:38.00px;height:10.09px;padding-right:4.5px;"><span>-</span></div>
<div class="t c" style="left:682.50px;top:165.20px;width:39.50px;height:10.09px;"><span>2</span></div>
<div class="t c" style="left:722.00px;top:165.20px;width:35.50px;height:10.09px;"><span>3</span></div>
<div class="t c" style="left:757.50px;top:165.20px;width:36.50px;height:10.09px;"><span>0</span></div>
<div class="t r" style="left:794.00px;top:165.20px;width:25.50px;height:10.09px;padding-right:4.5px;"><span>-</span></div>
<div class="t c" style="left:819.50px;top:165.20px;width:38.00px;height:10.09px;"><span>9</span></div>
<div class="t r" style="left:857.50px;top:165.20px;width:38.50px;height:10.09px;"><span>2.153.350</span></div>
<div class="t r" style="left:896.00px;top:165.20px;width:32.50px;height:10.09px;"><span>14,58254</span></div>
<div class="t r" style="left:928.50px;top:165.20px;width:22.30px;height:10.09px;"><span>0</span></div>
<div class="t c" style="left:14.00px;top:175.29px;width:23.50px;height:10.09px;"><span>ABDA</span></div>
<div class="t c" style="left:122.50px;top:175.29px;width:31.50px;height:10.09px;"><span>2014</span></div>
<div class="t c" style="left:154.00px;top:175.29px;width:35.00px;height:10.09px;"><span>31/Dec/14</span></div>
<div class="t c" style="left:189.00px;top:175.29px;width:35.00px;height:10.09px;"><span>13/Mar/15</span></div>
<div class="t c" style="left:224.00px;top:175.29px;width:32.25px;height:10.09px;"><span>72</span></div>
<div class="t r" style="left:256.25px;top:175.29px;width:44.50px;height:10.09px;"><span>1.462.449</span></div>
<div class="t r" style="left:300.75px;top:175.29px;width:48.25px;height:10.09px;"><span>1.219.660</span></div>
<div class="t r" style="left:349.00px;top:175.29px;width:39.00px;height:10.09px;padding-right:3px;"><span>1,19906</span></div>
<div class="t r" style="left:388.00px;top:175.29px;width:45.00px;height:10.09px;padding-right:3px;"><span>172.242</span></div>
<div class="t r" style="left:433.00px;top:175.29px;width:45.50px;height:10.09px;padding-right:3px;"><span>0,14122</span></div>
<div class="t c" style="left:478.50px;top:175.29px;width:24.00px;height:10.09px;"><span>1</span></div>
<div class="t c" style="left:502.50px;top:175.29px;width:33.00px;height:10.09px;"><span>1</span></div>
<div class="t c" style="left:535.50px;top:175.29px;width:45.00px;height:10.09px;"><span>63,09%</span></div>
<div class="t c" style="left:580.50px;top:175.29px;width:32.50px;height:10.09px;"><span>2</span></div>
<div class="t c" style="left:613.00px;top:175.29px;width:31.50px;height:10.09px;"><span>4</span></div>
<div class="t r" style="left:644.50px;top:175.29px;width:38.00px;height:10.09px;"><span>0,50000</span></div>
<div class="t c" style="left:682.50px;top:175.29px;width:39.50px;height:10.09px;"><span>3</span></div>
<div class="t c" style="left:722.00px;top:175.29px;width:35.50px;height:10.09px;"><span>3</span></div>
<div class="t c" style="left:757.50px;top:175.29px;width:36.50px;height:10.09px;"><span>0</span></div>
<div class="t r" style="left:794.00px;top:175.29px;width:25.50px;height:10.09px;padding-right:4.5px;"><span>-</span></div>
<div class="t c" style="left:819.50px;top:175.29px;width:38.00px;height:10.09px;"><span>4</span></div>
<div class="t r" style="left:857.50px;top:175.29px;width:38.50px;height:10.09px;"><span>2.681.038</span></div>
<div class="t r" style="left:896.00px;top:175.29px;width:32.50px;height:10.09px;"><span>14,80171</span></div>
<div class="t r" style="left:928.50px;top:175.29px;width:22.30px;height:10.09px;"><span>0</span></div>
<div class="t c" style="left:14.00px;top:185.38px;width:23.50px;height:10.09px;"><span>ABDA</span></div>
<div class="t c" style="left:122.50px;top:185.38px;width:31.50px;height:10.09px;"><span>2015</span></div>
<div class="t c" style="left:154.00px;top:185.38px;width:35.00px;height:10.09px;"><span>31/Dec/15</span></div>
<div class="t c" style="left:189.00px;top:185.38px;width:35.00px;height:10.09px;"><span>29/Feb/16</span></div>
<div class="t c" style="left:224.00px;top:185.38px;width:32.25px;height:10.09px;"><span>60</span></div>
<div class="t r" style="left:256.25px;top:185.38px;width:44.50px;height:10.09px;"><span>1.625.206</span></div>
<div class="t r" style="left:300.75px;top:185.38px;width:48.25px;height:10.09px;"><span>1.222.400</span></div>
<div class="t r" style="left:349.00px;top:185.38px;width:39.00px;height:10.09px;padding-right:3px;"><span>1,32952</span></div>
<div class="t r" style="left:388.00px;top:185.38px;width:45.00px;height:10.09px;padding-right:3px;"><span>268.564</span></div>
<div class="t r" style="left:433.00px;top:185.38px;width:45.50px;height:10.09px;padding-right:3px;"><span>0,21970</span></div>
<div class="t c" style="left:478.50px;top:185.38px;width:24.00px;height:10.09px;"><span>1</span></div>
<div class="t c" style="left:502.50px;top:185.38px;width:33.00px;height:10.09px;"><span>1</span></div>
<div class="t c" style="left:535.50px;top:185.38px;width:45.00px;height:10.09px;"><span>58,87%</span></div>
<div class="t c" style="left:580.50px;top:185.38px;width:32.50px;height:10.09px;"><span>2</span></div>
<div class="t c" style="left:613.00px;top:185.38px;width:31.50px;height:10.09px;"><span>4</span></div>
<div class="t r" style="left:644.50px;top:185.38px;width:38.00px;height:10.09px;"><span>0,50000</span></div>
<div class="t c" style="left:682.50px;top:185.38px;width:39.50px;height:10.09px;"><span>3</span></div>
<div class="t c" style="left:722.00px;top:185.38px;width:35.50px;height:10.09px;"><span>3</span></div>
<div class="t c" style="left:757.50px;top:185.38px;width:36.50px;height:10.09px;"><span>0</span></div>
<div class="t r" style="left:794.00px;top:185.38px;width:25.50px;height:10.09px;padding-right:4.5px;"><span>-</span></div>
<div class="t c" style="left:819.50px;top:185.38px;width:38.00px;height:10.09px;"><span>12</span></div>
<div class="t r" style="left:857.50px;top:185.38px;width:38.50px;height:10.09px;"><span>2.846.760</span></div>
<div class="t r" style="left:896.00px;top:185.38px;width:32.50px;height:10.09px;"><span>14,86169</span></div>
<div class="t r" style="left:928.50px;top:185.38px;width:22.30px;height:10.09px;"><span>0</span></div>
<div class="t c" style="left:14.00px;top:195.47px;width:23.50px;height:10.09px;"><span>ABDA</span></div>
<div class="t c" style="left:122.50px;top:195.47px;width:31.50px;height:10.09px;"><span>2016</span></div>
<div class="t c" style="left:154.00px;top:195.47px;width:35.00px;height:10.09px;"><span>31/Dec/16</span></div>
<div class="t c" style="left:189.00px;top:195.47px;width:35.00px;height:10.09px;"><span>28/Feb/17</span></div>
<div class="t c" style="left:224.00px;top:195.47px;width:32.25px;height:10.09px;"><span>59</span></div>
<div class="t r" style="left:256.25px;top:195.47px;width:44.50px;height:10.09px;"><span>1.582</span></div>
<div class="t r" style="left:300.75px;top:195.47px;width:48.25px;height:10.09px;"><span>1.232.196</span></div>
<div class="t r" style="left:349.00px;top:195.47px;width:39.00px;height:10.09px;padding-right:3px;"><span>0,00128</span></div>
<div class="t r" style="left:388.00px;top:195.47px;width:45.00px;height:10.09px;padding-right:3px;"><span>173.481</span></div>
<div class="t r" style="left:433.00px;top:195.47px;width:45.50px;height:10.09px;padding-right:3px;"><span>0,14079</span></div>
<div class="t c" style="left:478.50px;top:195.47px;width:24.00px;height:10.09px;"><span>1</span></div>
<div class="t c" style="left:502.50px;top:195.47px;width:33.00px;height:10.09px;"><span>1</span></div>
<div class="t c" style="left:535.50px;top:195.47px;width:45.00px;height:10.09px;"><span>43,32%</span></div>
<div class="t c" style="left:580.50px;top:195.47px;width:32.50px;height:10.09px;"><span>1</span></div>
<div class="t c" style="left:613.00px;top:195.47px;width:31.50px;height:10.09px;"><span>4</span></div>
<div class="t r" style="left:644.50px;top:195.47px;width:38.00px;height:10.09px;"><span>0,25000</span></div>
<div class="t c" style="left:682.50px;top:195.47px;width:39.50px;height:10.09px;"><span>3</span></div>
<div class="t c" style="left:722.00px;top:195.47px;width:35.50px;height:10.09px;"><span>3</span></div>
<div class="t c" style="left:757.50px;top:195.47px;width:36.50px;height:10.09px;"><span>0</span></div>
<div class="t r" style="left:794.00px;top:195.47px;width:25.50px;height:10.09px;padding-right:4.5px;"><span>-</span></div>
<div class="t c" style="left:819.50px;top:195.47px;width:38.00px;height:10.09px;"><span>9</span></div>
<div class="t r" style="left:857.50px;top:195.47px;width:38.50px;height:10.09px;"><span>2.813.839</span></div>
<div class="t r" style="left:896.00px;top:195.47px;width:32.50px;height:10.09px;"><span>14,85006</span></div>
<div class="t r" style="left:928.50px;top:195.47px;width:22.30px;height:10.09px;"><span>0</span></div>
<div class="t c" style="left:14.00px;top:205.56px;width:23.50px;height:10.09px;"><span>ABDA</span></div>
<div class="t c" style="left:122.50px;top:205.56px;width:31.50px;height:10.09px;"><span>2017</span></div>
<div class="t c" style="left:154.00px;top:205.56px;width:35.00px;height:10.09px;"><span>31/Dec/17</span></div>
<div class="t c" style="left:189.00px;top:205.56px;width:35.00px;height:10.09px;"><span>28/Feb/18</span></div>
<div class="t c" style="left:224.00px;top:205.56px;width:32.25px;height:10.09px;"><span>59</span></div>
<div class="t r" style="left:256.25px;top:205.56px;width:44.50px;height:10.09px;"><span>1.591.479</span></div>
<div class="t r" style="left:300.75px;top:205.56px;width:48.25px;height:10.09px;"><span>1.375.352</span></div>
<div class="t r" style="left:349.00px;top:205.56px;width:39.00px;height:10.09px;padding-right:3px;"><span>1,15714</span></div>
<div class="t r" style="left:388.00px;top:205.56px;width:45.00px;height:10.09px;padding-right:3px;"><span>160.882</span></div>
<div class="t r" style="left:433.00px;top:205.56px;width:45.50px;height:10.09px;padding-right:3px;"><span>0,11698</span></div>
<div class="t c" style="left:478.50px;top:205.56px;width:24.00px;height:10.09px;"><span>1</span></div>
<div class="t c" style="left:502.50px;top:205.56px;width:33.00px;height:10.09px;"><span>1</span></div>
<div class="t c" style="left:535.50px;top:205.56px;width:45.00px;height:10.09px;"><span>62,33%</span></div>
<div class="t c" style="left:580.50px;top:205.56px;width:32.50px;height:10.09px;"><span>1</span></div>
<div class="t c" style="left:613.00px;top:205.56px;width:31.50px;height:10.09px;"><span>4</span></div>
<div class="t r" style="left:644.50px;top:205.56px;width:38.00px;height:10.09px;"><span>0,25000</span></div>
<div class="t c" style="left:722.00px;top:205.56px;width:35.50px;height:10.09px;"><span>4</span></div>
<div class="t c" style="left:757.50px;top:205.56px;width:36.50px;height:10.09px;"><span>0</span></div>
<div class="t r" style="left:794.00px;top:205.56px;width:25.50px;height:10.09px;padding-right:4.5px;"><span>-</span></div>
<div class="t c" style="left:819.50px;top:205.56px;width:38.00px;height:10.09px;"><span>7</span></div>
<div class="t r" style="left:857.50px;top:205.56px;width:38.50px;height:10.09px;"><span>2.966.605</span></div>
<div class="t r" style="left:896.00px;top:205.56px;width:32.50px;height:10.09px;"><span>14,90295</span></div>
<div class="t r" style="left:928.50px;top:205.56px;width:22.30px;height:10.09px;"><span>0</span></div>
<div class="t c" style="left:14.00px;top:215.65px;width:23.50px;height:10.09px;"><span>ABMM</span></div>
<div class="t l" style="left:37.50px;top:215.65px;width:85.00px;height:10.09px;"><span>ABM Investama Tbk</span></div>
<div class="t c" style="left:122.50px;top:215.65px;width:31.50px;height:10.09px;"><span>2013</span></div>
<div class="t c" style="left:154.00px;top:215.65px;width:35.00px;height:10.09px;"><span>31/Dec/13</span></div>
<div class="t c" style="left:189.00px;top:215.65px;width:35.00px;height:10.09px;"><span>21/Mar/14</span></div>
<div class="t c" style="left:224.00px;top:215.65px;width:32.25px;height:10.09px;"><span>80</span></div>
<div class="t r" style="left:256.25px;top:215.65px;width:44.50px;height:10.09px;"><span>10.861.684</span></div>
<div class="t r" style="left:300.75px;top:215.65px;width:48.25px;height:10.09px;"><span>3.925.188</span></div>
<div class="t r" style="left:349.00px;top:215.65px;width:39.00px;height:10.09px;padding-right:3px;"><span>2,76718</span></div>
<div class="t r" style="left:388.00px;top:215.65px;width:45.00px;height:10.09px;padding-right:3px;"><span>252.777</span></div>
<div class="t r" style="left:433.00px;top:215.65px;width:45.50px;height:10.09px;padding-right:3px;"><span>0,06440</span></div>
<div class="t c" style="left:478.50px;top:215.65px;width:24.00px;height:10.09px;"><span>1</span></div>
<div class="t c" style="left:502.50px;top:215.65px;width:33.00px;height:10.09px;"><span>20</span></div>
<div class="t c" style="left:535.50px;top:215.65px;width:45.00px;height:10.09px;"><span>88,61%</span></div>
<div class="t c" style="left:580.50px;top:215.65px;width:32.50px;height:10.09px;"><span>0</span></div>
<div class="t c" style="left:613.00px;top:215.65px;width:31.50px;height:10.09px;"><span>4</span></div>
<div class="t r" style="left:644.50px;top:215.65px;width:38.00px;height:10.09px;padding-right:4.5px;"><span>-</span></div>
<div class="t c" style="left:682.50px;top:215.65px;width:39.50px;height:10.09px;"><span>2</span></div>
<div class="t c" style="left:722.00px;top:215.65px;width:35.50px;height:10.09px;"><span>3</span></div>
<div class="t c" style="left:757.50px;top:215.65px;width:36.50px;height:10.09px;"><span>0</span></div>
<div class="t r" style="left:794.00px;top:215.65px;width:25.50px;height:10.09px;padding-right:4.5px;"><span>-</span></div>
<div class="t c" style="left:819.50px;top:215.65px;width:38.00px;height:10.09px;"><span>3</span></div>
<div class="t r" style="left:857.50px;top:215.65px;width:38.50px;height:10.09px;"><span>14.786.872</span></div>
<div class="t r" style="left:896.00px;top:215.65px;width:32.50px;height:10.09px;"><span>16,50925</span></div>
<div class="t r" style="left:928.50px;top:215.65px;width:22.30px;height:10.09px;"><span>1</span></div>
<div class="t c" style="left:14.00px;top:225.74px;width:23.50px;height:10.09px;"><span>ABMM</span></div>
<div class="t c" style="left:122.50px;top:225.74px;width:31.50px;height:10.09px;"><span>2014</span></div>
<div class="t c" style="left:154.00px;top:225.74px;width:35.00px;height:10.09px;"><span>31/Dec/14</span></div>
<div class="t c" style="left:189.00px;top:225.74px;width:35.00px;height:10.09px;"><span>20/Mar/15</span></div>
<div class="t c" style="left:224.00px;top:225.74px;width:32.25px;height:10.09px;"><span>79</span></div>
<div class="t r" style="left:256.25px;top:225.74px;width:44.50px;height:10.09px;"><span>11.554.578</span></div>
<div class="t r" style="left:300.75px;top:225.74px;width:48.25px;height:10.09px;"><span>2.535.995</span></div>
<div class="t r" style="left:349.00px;top:225.74px;width:39.00px;height:10.09px;padding-right:3px;"><span>4,55622</span></div>
<div class="t r" style="left:388.00px;top:225.74px;width:45.00px;height:10.09px;"><span>(1.446.796)</span></div>
<div class="t r" style="left:433.00px;top:225.74px;width:45.50px;height:10.09px;"><span>(0,57050)</span></div>
<div class="t c" style="left:478.50px;top:225.74px;width:24.00px;height:10.09px;"><span>1</span></div>
<div class="t c" style="left:502.50px;top:225.74px;width:33.00px;height:10.09px;"><span>26</span></div>
<div class="t c" style="left:535.50px;top:225.74px;width:45.00px;height:10.09px;"><span>88,58%</span></div>
<div class="t c" style="left:580.50px;top:225.74px;width:32.50px;height:10.09px;"><span>0</span></div>
<div class="t c" style="left:613.00px;top:225.74px;width:31.50px;height:10.09px;"><span>4</span></div>
<div class="t r" style="left:644.50px;top:225.74px;width:38.00px;height:10.09px;padding-right:4.5px;"><span>-</span></div>
<div class="t c" style="left:682.50px;top:225.74px;width:39.50px;height:10.09px;"><span>2</span></div>
<div class="t c" style="left:722.00px;top:225.74px;width:35.50px;height:10.09px;"><span>3</span></div>
<div class="t c" style="left:757.50px;top:225.74px;width:36.50px;height:10.09px;"><span>0</span></div>
<div class="t r" style="left:794.00px;top:225.74px;width:25.50px;height:10.09px;padding-right:4.5px;"><span>-</span></div>
<div class="t c" style="left:819.50px;top:225.74px;width:38.00px;height:10.09px;"><span>3</span></div>
<div class="t r" style="left:857.50px;top:225.74px;width:38.50px;height:10.09px;"><span>14.090.573</span></div>
<div class="t r" style="left:896.00px;top:225.74px;width:32.50px;height:10.09px;"><span>16,46102</span></div>
<div class="t r" style="left:928.50px;top:225.74px;width:22.30px;height:10.09px;"><span>1</span></div>
<div class="t c" style="left:14.00px;top:235.83px;width:23.50px;height:10.09px;"><span>ABMM</span></div>
<div class="t c" style="left:122.50px;top:235.83px;width:31.50px;height:10.09px;"><span>2015</span></div>
<div class="t c" style="left:154.00px;top:235.83px;width:35.00px;height:10.09px;"><span>31/Dec/15</span></div>
<div class="t c" style="left:189.00px;top:235.83px;width:35.00px;height:10.09px;"><span>24/Mar/16</span></div>
<div class="t c" style="left:224.00px;top:235.83px;width:32.25px;height:10.09px;"><span>84</span></div>
<div class="t r" style="left:256.25px;top:235.83px;width:44.50px;height:10.09px;"><span>14.019.189</span></div>
<div class="t r" style="left:300.75px;top:235.83px;width:48.25px;height:10.09px;"><span>2.394.208</span></div>
<div class="t r" style="left:349.00px;top:235.83px;width:39.00px;height:10.09px;padding-right:3px;"><span>5,85546</span></div>
<div class="t r" style="left:388.00px;top:235.83px;width:45.00px;height:10.09px;"><span>(625.368)</span></div>
<div class="t r" style="left:433.00px;top:235.83px;width:45.50px;height:10.09px;"><span>(0,26120)</span></div>
<div class="t c" style="left:478.50px;top:235.83px;width:24.00px;height:10.09px;"><span>1</span></div>
<div class="t c" style="left:580.50px;top:235.83px;width:32.50px;height:10.09px;"><span>1</span></div>
<div class="t c" style="left:613.00px;top:235.83px;width:31.50px;height:10.09px;"><span>6</span></div>
<div class="t r" style="left:644.50px;top:235.83px;width:38.00px;height:10.09px;"><span>0,16667</span></div>
<div class="t c" style="left:682.50px;top:235.83px;width:39.50px;height:10.09px;"><span>1</span></div>
<div class="t c" style="left:722.00px;top:235.83px;width:35.50px;height:10.09px;"><span>3</span></div>
<div class="t c" style="left:757.50px;top:235.83px;width:36.50px;height:10.09px;"><span>0</span></div>
<div class="t r" style="left:794.00px;top:235.83px;width:25.50px;height:10.09px;padding-right:4.5px;"><span>-</span></div>
<div class="t c" style="left:819.50px;top:235.83px;width:38.00px;height:10.09px;"><span>13</span></div>
<div class="t r" style="left:857.50px;top:235.83px;width:38.50px;height:10.09px;"><span>16.413.397</span></div>
<div class="t r" style="left:896.00px;top:235.83px;width:32.50px;height:10.09px;"><span>16,61361</span></div>
<div class="t r" style="left:928.50px;top:235.83px;width:22.30px;height:10.09px;"><span>1</span></div>
<div class="t c" style="left:14.00px;top:245.92px;width:23.50px;height:10.09px;"><span>ABMM</span></div>
<div class="t c" style="left:122.50px;top:245.92px;width:31.50px;height:10.09px;"><span>2016</span></div>
<div class="t c" style="left:154.00px;top:245.92px;width:35.00px;height:10.09px;"><span>31/Dec/16</span></div>
<div class="t c" style="left:189.00px;top:245.92px;width:35.00px;height:10.09px;"><span>30/Mar/17</span></div>
<div class="t c" style="left:224.00px;top:245.92px;width:32.25px;height:10.09px;"><span>89</span></div>
<div class="t r" style="left:256.25px;top:245.92px;width:44.50px;height:10.09px;"><span>12.280.077</span></div>
<div class="t r" style="left:300.75px;top:245.92px;width:48.25px;height:10.09px;"><span>2.139.198</span></div>
<div class="t r" style="left:349.00px;top:245.92px;width:39.00px;height:10.09px;padding-right:3px;"><span>5,74051</span></div>
<div class="t r" style="left:388.00px;top:245.92px;width:45.00px;height:10.09px;padding-right:3px;"><span>92.737</span></div>
<div class="t r" style="left:433.00px;top:245.92px;width:45.50px;height:10.09px;padding-right:3px;"><span>0,04335</span></div>
<div class="t c" style="left:478.50px;top:245.92px;width:24.00px;height:10.09px;"><span>1</span></div>
<div class="t c" style="left:580.50px;top:245.92px;width:32.50px;height:10.09px;"><span>1</span></div>
<div class="t c" style="left:613.00px;top:245.92px;width:31.50px;height:10.09px;"><span>3</span></div>
<div class="t r" style="left:644.50px;top:245.92px;width:38.00px;height:10.09px;"><span>0,33333</span></div>
<div class="t c" style="left:722.00px;top:245.92px;width:35.50px;height:10.09px;"><span>3</span></div>
<div class="t c" style="left:757.50px;top:245.92px;width:36.50px;height:10.09px;"><span>0</span></div>
<div class="t r" style="left:794.00px;top:245.92px;width:25.50px;height:10.09px;padding-right:4.5px;"><span>-</span></div>
<div class="t c" style="left:819.50px;top:245.92px;width:38.00px;height:10.09px;"><span>11</span></div>
<div class="t r" style="left:857.50px;top:245.92px;width:38.50px;height:10.09px;"><span>14.419.275</span></div>
<div class="t r" style="left:896.00px;top:245.92px;width:32.50px;height:10.09px;"><span>16,48408</span></div>
<div class="t r" style="left:928.50px;top:245.92px;width:22.30px;height:10.09px;"><span>1</span></div>
<div class="t c" style="left:14.00px;top:256.01px;width:23.50px;height:10.09px;"><span>ABMM</span></div>
<div class="t c" style="left:122.50px;top:256.01px;width:31.50px;height:10.09px;"><span>2017</span></div>
<div class="t c" style="left:154.00px;top:256.01px;width:35.00px;height:10.09px;"><span>31/Dec/17</span></div>
<div class="t c" style="left:189.00px;top:256.01px;width:35.00px;height:10.09px;"><span>28/Mar/18</span></div>
<div class="t c" style="left:224.00px;top:256.01px;width:32.25px;height:10.09px;"><span>87</span></div>
<div class="t r" style="left:256.25px;top:256.01px;width:44.50px;height:10.09px;"><span>11.926.992</span></div>
<div class="t r" style="left:300.75px;top:256.01px;width:48.25px;height:10.09px;"><span>2.199.152</span></div>
<div class="t r" style="left:349.00px;top:256.01px;width:39.00px;height:10.09px;padding-right:3px;"><span>6,42345</span></div>
<div class="t r" style="left:388.00px;top:256.01px;width:45.00px;height:10.09px;padding-right:3px;"><span>51.465</span></div>
<div class="t r" style="left:433.00px;top:256.01px;width:45.50px;height:10.09px;padding-right:3px;"><span>0,02340</span></div>
<div class="t c" style="left:478.50px;top:256.01px;width:24.00px;height:10.09px;"><span>1</span></div>
<div class="t c" style="left:502.50px;top:256.01px;width:33.00px;height:10.09px;"><span>31</span></div>
<div class="t c" style="left:535.50px;top:256.01px;width:45.00px;height:10.09px;"><span>88,70%</span></div>
<div class="t c" style="left:580.50px;top:256.01px;width:32.50px;height:10.09px;"><span>1</span></div>
<div class="t c" style="left:613.00px;top:256.01px;width:31.50px;height:10.09px;"><span>3</span></div>
<div class="t r" style="left:644.50px;top:256.01px;width:38.00px;height:10.09px;"><span>0,33333</span></div>
<div class="t c" style="left:722.00px;top:256.01px;width:35.50px;height:10.09px;"><span>3</span></div>
<div class="t c" style="left:757.50px;top:256.01px;width:36.50px;height:10.09px;"><span>0</span></div>
<div class="t r" style="left:794.00px;top:256.01px;width:25.50px;height:10.09px;padding-right:4.5px;"><span>-</span></div>
<div class="t c" style="left:819.50px;top:256.01px;width:38.00px;height:10.09px;"><span>4</span></div>
<div class="t r" style="left:857.50px;top:256.01px;width:38.50px;height:10.09px;"><span>14.126.144</span></div>
<div class="t r" style="left:896.00px;top:256.01px;width:32.50px;height:10.09px;"><span>16,46354</span></div>
<div class="t r" style="left:928.50px;top:256.01px;width:22.30px;height:10.09px;"><span>1</span></div>
<div class="t c" style="left:14.00px;top:266.10px;width:23.50px;height:10.09px;"><span>ACES</span></div>
<div class="t l" style="left:37.50px;top:266.10px;width:85.00px;height:10.09px;"><span>Ace Hardware Indonesia Tbk</span></div>
<div class="t c" style="left:122.50px;top:266.10px;width:31.50px;height:10.09px;"><span>2013</span></div>
<div class="t c" style="left:154.00px;top:266.10px;width:35.00px;height:10.09px;"><span>31/Dec/13</span></div>
<div class="t c" style="left:189.00px;top:266.10px;width:35.00px;height:10.09px;"><span>27/Mar/14</span></div>
<div class="t c" style="left:224.00px;top:266.10px;width:32.25px;height:10.09px;"><span>86</span></div>
<div class="t r" style="left:256.25px;top:266.10px;width:44.50px;height:10.09px;"><span>563.420</span></div>
<div class="t r" style="left:300.75px;top:266.10px;width:48.25px;height:10.09px;"><span>1.915.498</span></div>
<div class="t r" style="left:349.00px;top:266.10px;width:39.00px;height:10.09px;padding-right:3px;"><span>0,29414</span></div>
<div class="t r" style="left:388.00px;top:266.10px;width:45.00px;height:10.09px;padding-right:3px;"><span>503.004</span></div>
<div class="t r" style="left:433.00px;top:266.10px;width:45.50px;height:10.09px;padding-right:3px;"><span>0,26260</span></div>
<div class="t c" style="left:478.50px;top:266.10px;width:24.00px;height:10.09px;"><span>1</span></div>
<div class="t c" style="left:502.50px;top:266.10px;width:33.00px;height:10.09px;"><span>1</span></div>
<div class="t c" style="left:535.50px;top:266.10px;width:45.00px;height:10.09px;"><span>59,97%</span></div>
<div class="t c" style="left:580.50px;top:266.10px;width:32.50px;height:10.09px;"><span>1</span></div>
<div class="t c" style="left:613.00px;top:266.10px;width:31.50px;height:10.09px;"><span>4</span></div>
<div class="t r" style="left:644.50px;top:266.10px;width:38.00px;height:10.09px;"><span>0,25000</span></div>
<div class="t c" style="left:682.50px;top:266.10px;width:39.50px;height:10.09px;"><span>2</span></div>
<div class="t c" style="left:722.00px;top:266.10px;width:35.50px;height:10.09px;"><span>3</span></div>
<div class="t c" style="left:757.50px;top:266.10px;width:36.50px;height:10.09px;"><span>0</span></div>
<div class="t r" style="left:794.00px;top:266.10px;width:25.50px;height:10.09px;padding-right:4.5px;"><span>-</span></div>
<div class="t c" style="left:819.50px;top:266.10px;width:38.00px;height:10.09px;"><span>4</span></div>
<div class="t r" style="left:857.50px;top:266.10px;width:38.50px;height:10.09px;"><span>2.478.919</span></div>
<div class="t r" style="left:896.00px;top:266.10px;width:32.50px;height:10.09px;"><span>14,72333</span></div>
<div class="t r" style="left:928.50px;top:266.10px;width:22.30px;height:10.09px;"><span>0</span></div>
<div class="t c" style="left:14.00px;top:276.19px;width:23.50px;height:10.09px;"><span>ACES</span></div>
<div class="t c" style="left:122.50px;top:276.19px;width:31.50px;height:10.09px;"><span>2014</span></div>
<div class="t c" style="left:154.00px;top:276.19px;width:35.00px;height:10.09px;"><span>31/Dec/14</span></div>
<div class="t c" style="left:189.00px;top:276.19px;width:35.00px;height:10.09px;"><span>20/Mar/15</span></div>
<div class="t c" style="left:224.00px;top:276.19px;width:32.25px;height:10.09px;"><span>79</span></div>
<div class="t r" style="left:256.25px;top:276.19px;width:44.50px;height:10.09px;"><span>585.200</span></div>
<div class="t r" style="left:300.75px;top:276.19px;width:48.25px;height:10.09px;"><span>2.362.148</span></div>
<div class="t r" style="left:349.00px;top:276.19px;width:39.00px;height:10.09px;padding-right:3px;"><span>0,24774</span></div>
<div class="t r" style="left:388.00px;top:276.19px;width:45.00px;height:10.09px;padding-right:3px;"><span>548.892</span></div>
<div class="t r" style="left:433.00px;top:276.19px;width:45.50px;height:10.09px;padding-right:3px;"><span>0,23237</span></div>
<div class="t c" style="left:478.50px;top:276.19px;width:24.00px;height:10.09px;"><span>1</span></div>
<div class="t c" style="left:502.50px;top:276.19px;width:33.00px;height:10.09px;"><span>1</span></div>
<div class="t c" style="left:535.50px;top:276.19px;width:45.00px;height:10.09px;"><span>59,97%</span></div>
<div class="t c" style="left:580.50px;top:276.19px;width:32.50px;height:10.09px;"><span>1</span></div>
<div class="t c" style="left:613.00px;top:276.19px;width:31.50px;height:10.09px;"><span>4</span></div>
<div class="t r" style="left:644.50px;top:276.19px;width:38.00px;height:10.09px;"><span>0,25000</span></div>
<div class="t c" style="left:682.50px;top:276.19px;width:39.50px;height:10.09px;"><span>2</span></div>
<div class="t c" style="left:722.00px;top:276.19px;width:35.50px;height:10.09px;"><span>3</span></div>
<div class="t c" style="left:757.50px;top:276.19px;width:36.50px;height:10.09px;"><span>0</span></div>
<div class="t r" style="left:794.00px;top:276.19px;width:25.50px;height:10.09px;padding-right:4.5px;"><span>-</span></div>
<div class="t c" style="left:819.50px;top:276.19px;width:38.00px;height:10.09px;"><span>4</span></div>
<div class="t r" style="left:857.50px;top:276.19px;width:38.50px;height:10.09px;"><span>2.947.349</span></div>
<div class="t r" style="left:896.00px;top:276.19px;width:32.50px;height:10.09px;"><span>14,89642</span></div>
<div class="t r" style="left:928.50px;top:276.19px;width:22.30px;height:10.09px;"><span>0</span></div>
<div class="t c" style="left:14.00px;top:286.28px;width:23.50px;height:10.09px;"><span>ACES</span></div>
<div class="t c" style="left:122.50px;top:286.28px;width:31.50px;height:10.09px;"><span>2015</span></div>
<div class="t c" style="left:154.00px;top:286.28px;width:35.00px;height:10.09px;"><span>31/Dec/15</span></div>
<div class="t c" style="left:189.00px;top:286.28px;width:35.00px;height:10.09px;"><span>30/Mar/16</span></div>
<div class="t c" style="left:224.00px;top:286.28px;width:32.25px;height:10.09px;"><span>90</span></div>
<div class="t r" style="left:256.25px;top:286.28px;width:44.50px;height:10.09px;"><span>638.724</span></div>
<div class="t r" style="left:300.75px;top:286.28px;width:48.25px;height:10.09px;"><span>2.628.825</span></div>
<div class="t r" style="left:349.00px;top:286.28px;width:39.00px;height:10.09px;padding-right:3px;"><span>0,24297</span></div>
<div class="t r" style="left:388.00px;top:286.28px;width:45.00px;height:10.09px;padding-right:3px;"><span>584.873</span></div>
<div class="t r" style="left:433.00px;top:286.28px;width:45.50px;height:10.09px;padding-right:3px;"><span>0,22248</span></div>
<div class="t c" style="left:478.50px;top:286.28px;width:24.00px;height:10.09px;"><span>1</span></div>
<div class="t c" style="left:502.50px;top:286.28px;width:33.00px;height:10.09px;"><span>1</span></div>
<div class="t c" style="left:535.50px;top:286.28px;width:45.00px;height:10.09px;"><span>60,25%</span></div>
<div class="t c" style="left:580.50px;top:286.28px;width:32.50px;height:10.09px;"><span>2</span></div>
<div class="t c" style="left:613.00px;top:286.28px;width:31.50px;height:10.09px;"><span>5</span></div>
<div class="t r" style="left:644.50px;top:286.28px;width:38.00px;height:10.09px;"><span>0,40000</span></div>
<div class="t c" style="left:682.50px;top:286.28px;width:39.50px;height:10.09px;"><span>2</span></div>
<div class="t c" style="left:722.00px;top:286.28px;width:35.50px;height:10.09px;"><span>3</span></div>
<div class="t c" style="left:757.50px;top:286.28px;width:36.50px;height:10.09px;"><span>0</span></div>
<div class="t r" style="left:794.00px;top:286.28px;width:25.50px;height:10.09px;padding-right:4.5px;"><span>-</span></div>
<div class="t c" style="left:819.50px;top:286.28px;width:38.00px;height:10.09px;"><span>4</span></div>
<div class="t r" style="left:857.50px;top:286.28px;width:38.50px;height:10.09px;"><span>3.267.550</span></div>
<div class="t r" style="left:896.00px;top:286.28px;width:32.50px;height:10.09px;"><span>14,99955</span></div>
<div class="t r" style="left:928.50px;top:286.28px;width:22.30px;height:10.09px;"><span>0</span></div>
<div class="t c" style="left:14.00px;top:296.37px;width:23.50px;height:10.09px;"><span>ACES</span></div>
<div class="t c" style="left:122.50px;top:296.37px;width:31.50px;height:10.09px;"><span>2016</span></div>
<div class="t c" style="left:154.00px;top:296.37px;width:35.00px;height:10.09px;"><span>31/Dec/16</span></div>
<div class="t c" style="left:189.00px;top:296.37px;width:35.00px;height:10.09px;"><span>27/Mar/17</span></div>
<div class="t c" style="left:224.00px;top:296.37px;width:32.25px;height:10.09px;"><span>86</span></div>
<div class="t r" style="left:256.25px;top:296.37px;width:44.50px;height:10.09px;"><span>682.374</span></div>
<div class="t r" style="left:300.75px;top:296.37px;width:48.25px;height:10.09px;"><span>3.048.727</span></div>
<div class="t r" style="left:349.00px;top:296.37px;width:39.00px;height:10.09px;padding-right:3px;"><span>0,22382</span></div>
<div class="t r" style="left:388.00px;top:296.37px;width:45.00px;height:10.09px;padding-right:3px;"><span>706.150</span></div>
<div class="t r" style="left:433.00px;top:296.37px;width:45.50px;height:10.09px;padding-right:3px;"><span>0,23162</span></div>
<div class="t c" style="left:478.50px;top:296.37px;width:24.00px;height:10.09px;"><span>1</span></div>
<div class="t c" style="left:502.50px;top:296.37px;width:33.00px;height:10.09px;"><span>1</span></div>
<div class="t c" style="left:535.50px;top:296.37px;width:45.00px;height:10.09px;"><span>60,44%</span></div>
<div class="t c" style="left:580.50px;top:296.37px;width:32.50px;height:10.09px;"><span>1</span></div>
<div class="t c" style="left:613.00px;top:296.37px;width:31.50px;height:10.09px;"><span>4</span></div>
<div class="t r" style="left:644.50px;top:296.37px;width:38.00px;height:10.09px;"><span>0,25000</span></div>
<div class="t c" style="left:682.50px;top:296.37px;width:39.50px;height:10.09px;"><span>2</span></div>
<div class="t c" style="left:722.00px;top:296.37px;width:35.50px;height:10.09px;"><span>3</span></div>
<div class="t c" style="left:757.50px;top:296.37px;width:36.50px;height:10.09px;"><span>0</span></div>
<div class="t r" style="left:794.00px;top:296.37px;width:25.50px;height:10.09px;padding-right:4.5px;"><span>-</span></div>
<div class="t c" style="left:819.50px;top:296.37px;width:38.00px;height:10.09px;"><span>24</span></div>
<div class="t r" style="left:857.50px;top:296.37px;width:38.50px;height:10.09px;"><span>3.731.102</span></div>
<div class="t r" style="left:896.00px;top:296.37px;width:32.50px;height:10.09px;"><span>15,13221</span></div>
<div class="t r" style="left:928.50px;top:296.37px;width:22.30px;height:10.09px;"><span>0</span></div>
<div class="t c" style="left:14.00px;top:306.46px;width:23.50px;height:10.09px;"><span>ACES</span></div>
<div class="t c" style="left:122.50px;top:306.46px;width:31.50px;height:10.09px;"><span>2017</span></div>
<div class="t c" style="left:154.00px;top:306.46px;width:35.00px;height:10.09px;"><span>31/Dec/17</span></div>
<div class="t c" style="left:189.00px;top:306.46px;width:35.00px;height:10.09px;"><span>27/Mar/18</span></div>
<div class="t c" style="left:224.00px;top:306.46px;width:32.25px;height:10.09px;"><span>86</span></div>
<div class="t r" style="left:256.25px;top:306.46px;width:44.50px;height:10.09px;"><span>918.419</span></div>
<div class="t r" style="left:300.75px;top:306.46px;width:48.25px;height:10.09px;"><span>3.510.422</span></div>
<div class="t r" style="left:349.00px;top:306.46px;width:39.00px;height:10.09px;padding-right:3px;"><span>0,26163</span></div>
<div class="t r" style="left:388.00px;top:306.46px;width:45.00px;height:10.09px;padding-right:3px;"><span>780.687</span></div>
<div class="t r" style="left:433.00px;top:306.46px;width:45.50px;height:10.09px;padding-right:3px;"><span>0,22239</span></div>
<div class="t c" style="left:478.50px;top:306.46px;width:24.00px;height:10.09px;"><span>1</span></div>
<div class="t c" style="left:580.50px;top:306.46px;width:32.50px;height:10.09px;"><span>1</span></div>
<div class="t c" style="left:613.00px;top:306.46px;width:31.50px;height:10.09px;"><span>4</span></div>
<div class="t r" style="left:644.50px;top:306.46px;width:38.00px;height:10.09px;"><span>0,25000</span></div>
<div class="t c" style="left:722.00px;top:306.46px;width:35.50px;height:10.09px;"><span>3</span></div>
<div class="t c" style="left:757.50px;top:306.46px;width:36.50px;height:10.09px;"><span>0</span></div>
<div class="t r" style="left:794.00px;top:306.46px;width:25.50px;height:10.09px;padding-right:4.5px;"><span>-</span></div>
<div class="t c" style="left:819.50px;top:306.46px;width:38.00px;height:10.09px;"><span>24</span></div>
<div class="t r" style="left:857.50px;top:306.46px;width:38.50px;height:10.09px;"><span>4.428.841</span></div>
<div class="t r" style="left:896.00px;top:306.46px;width:32.50px;height:10.09px;"><span>15,30365</span></div>
<div class="t r" style="left:928.50px;top:306.46px;width:22.30px;height:10.09px;"><span>0</span></div>
<div class="t c" style="left:14.00px;top:316.55px;width:23.50px;height:10.09px;"><span>ACST</span></div>
<div class="t l" style="left:37.50px;top:316.55px;width:85.00px;height:10.09px;"><span>PT Acset Indonusa Tbk.</span></div>
<div class="t c" style="left:122.50px;top:316.55px;width:31.50px;height:10.09px;"><span>2013</span></div>
<div class="t c" style="left:154.00px;top:316.55px;width:35.00px;height:10.09px;"><span>31/Dec/13</span></div>
<div class="t c" style="left:189.00px;top:316.55px;width:35.00px;height:10.09px;"><span>18/Mar/14</span></div>
<div class="t c" style="left:224.00px;top:316.55px;width:32.25px;height:10.09px;"><span>77</span></div>
<div class="t r" style="left:256.25px;top:316.55px;width:44.50px;height:10.09px;"><span>737.915</span></div>
<div class="t r" style="left:300.75px;top:316.55px;width:48.25px;height:10.09px;"><span>560.442</span></div>
<div class="t r" style="left:349.00px;top:316.55px;width:39.00px;height:10.09px;padding-right:3px;"><span>1,31667</span></div>
<div class="t r" style="left:388.00px;top:316.55px;width:45.00px;height:10.09px;padding-right:3px;"><span>99.215</span></div>
<div class="t r" style="left:433.00px;top:316.55px;width:45.50px;height:10.09px;padding-right:3px;"><span>0,17703</span></div>
<div class="t c" style="left:478.50px;top:316.55px;width:24.00px;height:10.09px;"><span>1</span></div>
<div class="t c" style="left:502.50px;top:316.55px;width:33.00px;height:10.09px;"><span>2</span></div>
<div class="t c" style="left:535.50px;top:316.55px;width:45.00px;height:10.09px;"><span>100,00%</span></div>
<div class="t c" style="left:580.50px;top:316.55px;width:32.50px;height:10.09px;"><span>1</span></div>
<div class="t c" style="left:613.00px;top:316.55px;width:31.50px;height:10.09px;"><span>4</span></div>
<div class="t r" style="left:644.50px;top:316.55px;width:38.00px;height:10.09px;"><span>0,25000</span></div>
<div class="t c" style="left:682.50px;top:316.55px;width:39.50px;height:10.09px;"><span>1</span></div>
<div class="t c" style="left:722.00px;top:316.55px;width:35.50px;height:10.09px;"><span>3</span></div>
<div class="t c" style="left:757.50px;top:316.55px;width:36.50px;height:10.09px;"><span>0</span></div>
<div class="t r" style="left:794.00px;top:316.55px;width:25.50px;height:10.09px;padding-right:4.5px;"><span>-</span></div>
<div class="t c" style="left:819.50px;top:316.55px;width:38.00px;height:10.09px;"><span>20</span></div>
<div class="t r" style="left:857.50px;top:316.55px;width:38.50px;height:10.09px;"><span>1.298.358</span></div>
<div class="t r" style="left:896.00px;top:316.55px;width:32.50px;height:10.09px;"><span>14,07661</span></div>
<div class="t r" style="left:928.50px;top:316.55px;width:22.30px;height:10.09px;"><span>1</span></div>
<div class="t c" style="left:14.00px;top:326.64px;width:23.50px;height:10.09px;"><span>ACST</span></div>
<div class="t c" style="left:122.50px;top:326.64px;width:31.50px;height:10.09px;"><span>2014</span></div>
<div class="t c" style="left:154.00px;top:326.64px;width:35.00px;height:10.09px;"><span>31/Dec/14</span></div>
<div class="t c" style="left:189.00px;top:326.64px;width:35.00px;height:10.09px;"><span>13/Mar/15</span></div>
<div class="t c" style="left:224.00px;top:326.64px;width:32.25px;height:10.09px;"><span>72</span></div>
<div class="t r" style="left:256.25px;top:326.64px;width:44.50px;height:10.09px;"><span>826.313</span></div>
<div class="t r" style="left:300.75px;top:326.64px;width:48.25px;height:10.09px;"><span>647.336</span></div>
<div class="t r" style="left:349.00px;top:326.64px;width:39.00px;height:10.09px;padding-right:3px;"><span>1,27648</span></div>
<div class="t r" style="left:388.00px;top:326.64px;width:45.00px;height:10.09px;padding-right:3px;"><span>103.800</span></div>
<div class="t r" style="left:433.00px;top:326.64px;width:45.50px;height:10.09px;padding-right:3px;"><span>0,16035</span></div>
<div class="t c" style="left:478.50px;top:326.64px;width:24.00px;height:10.09px;"><span>1</span></div>
<div class="t c" style="left:502.50px;top:326.64px;width:33.00px;height:10.09px;"><span>4</span></div>
<div class="t c" style="left:535.50px;top:326.64px;width:45.00px;height:10.09px;"><span>69,00%</span></div>
<div class="t c" style="left:580.50px;top:326.64px;width:32.50px;height:10.09px;"><span>1</span></div>
<div class="t c" style="left:613.00px;top:326.64px;width:31.50px;height:10.09px;"><span>4</span></div>
<div class="t r" style="left:644.50px;top:326.64px;width:38.00px;height:10.09px;"><span>0,25000</span></div>
<div class="t c" style="left:682.50px;top:326.64px;width:39.50px;height:10.09px;"><span>1</span></div>
<div class="t c" style="left:722.00px;top:326.64px;width:35.50px;height:10.09px;"><span>3</span></div>
<div class="t c" style="left:757.50px;top:326.64px;width:36.50px;height:10.09px;"><span>0</span></div>
<div class="t r" style="left:794.00px;top:326.64px;width:25.50px;height:10.09px;padding-right:4.5px;"><span>-</span></div>
<div class="t c" style="left:819.50px;top:326.64px;width:38.00px;height:10.09px;"><span>37</span></div>
<div class="t r" style="left:857.50px;top:326.64px;width:38.50px;height:10.09px;"><span>1.473.649</span></div>
<div class="t r" style="left:896.00px;top:326.64px;width:32.50px;height:10.09px;"><span>14,20325</span></div>
<div class="t r" style="left:928.50px;top:326.64px;width:22.30px;height:10.09px;"><span>1</span></div>
<div class="t c" style="left:14.00px;top:336.73px;width:23.50px;height:10.09px;"><span>ACST</span></div>
<div class="t c" style="left:122.50px;top:336.73px;width:31.50px;height:10.09px;"><span>2015</span></div>
<div class="t c" style="left:154.00px;top:336.73px;width:35.00px;height:10.09px;"><span>31/Dec/15</span></div>
<div class="t c" style="left:189.00px;top:336.73px;width:35.00px;height:10.09px;"><span>20/Feb/16</span></div>
<div class="t c" style="left:224.00px;top:336.73px;width:32.25px;height:10.09px;"><span>51</span></div>
<div class="t r" style="left:300.75px;top:336.73px;width:48.25px;height:10.09px;"><span>664.859</span></div>
<div class="t r" style="left:349.00px;top:336.73px;width:39.00px;height:10.09px;padding-right:4.5px;"><span>-</span></div>
<div class="t r" style="left:388.00px;top:336.73px;width:45.00px;height:10.09px;padding-right:3px;"><span>42.222</span></div>
<div class="t r" style="left:433.00px;top:336.73px;width:45.50px;height:10.09px;padding-right:3px;"><span>0,06351</span></div>
<div class="t c" style="left:478.50px;top:336.73px;width:24.00px;height:10.09px;"><span>1</span></div>
<div class="t c" style="left:502.50px;top:336.73px;width:33.00px;height:10.09px;"><span>5</span></div>
<div class="t c" style="left:535.50px;top:336.73px;width:45.00px;height:10.09px;"><span>69,00%</span></div>
<div class="t c" style="left:580.50px;top:336.73px;width:32.50px;height:10.09px;"><span>1</span></div>
<div class="t c" style="left:613.00px;top:336.73px;width:31.50px;height:10.09px;"><span>6</span></div>
<div class="t r" style="left:644.50px;top:336.73px;width:38.00px;height:10.09px;"><span>0,16667</span></div>
<div class="t c" style="left:682.50px;top:336.73px;width:39.50px;height:10.09px;"><span>1</span></div>
<div class="t c" style="left:722.00px;top:336.73px;width:35.50px;height:10.09px;"><span>3</span></div>
<div class="t c" style="left:757.50px;top:336.73px;width:36.50px;height:10.09px;"><span>0</span></div>
<div class="t r" style="left:794.00px;top:336.73px;width:25.50px;height:10.09px;padding-right:4.5px;"><span>-</span></div>
<div class="t c" style="left:819.50px;top:336.73px;width:38.00px;height:10.09px;"><span>4</span></div>
<div class="t c" style="left:896.00px;top:336.73px;width:32.50px;height:10.09px;"><span>#NUM!</span></div>
<div class="t r" style="left:928.50px;top:336.73px;width:22.30px;height:10.09px;"><span>1</span></div>
<div class="t c" style="left:14.00px;top:346.82px;width:23.50px;height:10.09px;"><span>ACST</span></div>
<div class="t c" style="left:122.50px;top:346.82px;width:31.50px;height:10.09px;"><span>2016</span></div>
<div class="t c" style="left:154.00px;top:346.82px;width:35.00px;height:10.09px;"><span>31/Dec/16</span></div>
<div class="t c" style="left:189.00px;top:346.82px;width:35.00px;height:10.09px;"><span>20/Feb/17</span></div>
<div class="t c" style="left:224.00px;top:346.82px;width:32.25px;height:10.09px;"><span>51</span></div>
<div class="t c" style="left:349.00px;top:346.82px;width:39.00px;height:10.09px;"><span>#DIV/0!</span></div>
<div class="t c" style="left:433.00px;top:346.82px;width:45.50px;height:10.09px;"><span>#DIV/0!</span></div>
<div class="t c" style="left:478.50px;top:346.82px;width:24.00px;height:10.09px;"><span>1</span></div>
<div class="t c" style="left:580.50px;top:346.82px;width:32.50px;height:10.09px;"><span>1</span></div>
<div class="t c" style="left:613.00px;top:346.82px;width:31.50px;height:10.09px;"><span>3</span></div>
<div class="t r" style="left:644.50px;top:346.82px;width:38.00px;height:10.09px;"><span>0,33333</span></div>
<div class="t c" style="left:722.00px;top:346.82px;width:35.50px;height:10.09px;"><span>3</span></div>
<div class="t c" style="left:757.50px;top:346.82px;width:36.50px;height:10.09px;"><span>0</span></div>
<div class="t r" style="left:794.00px;top:346.82px;width:25.50px;height:10.09px;padding-right:4.5px;"><span>-</span></div>
<div class="t c" style="left:819.50px;top:346.82px;width:38.00px;height:10.09px;"><span>4</span></div>
<div class="t c" style="left:896.00px;top:346.82px;width:32.50px;height:10.09px;"><span>#NUM!</span></div>
<div class="t r" style="left:928.50px;top:346.82px;width:22.30px;height:10.09px;"><span>1</span></div>
<div class="t c" style="left:14.00px;top:356.91px;width:23.50px;height:10.09px;"><span>ACST</span></div>
<div class="t c" style="left:122.50px;top:356.91px;width:31.50px;height:10.09px;"><span>2017</span></div>
<div class="t c" style="left:154.00px;top:356.91px;width:35.00px;height:10.09px;"><span>31/Dec/17</span></div>
<div class="t c" style="left:189.00px;top:356.91px;width:35.00px;height:10.09px;"><span>26/Feb/18</span></div>
<div class="t c" style="left:224.00px;top:356.91px;width:32.25px;height:10.09px;"><span>57</span></div>
<div class="t r" style="left:256.25px;top:356.91px;width:44.50px;height:10.09px;"><span>3.869.352</span></div>
<div class="t r" style="left:300.75px;top:356.91px;width:48.25px;height:10.09px;"><span>1.437.127</span></div>
<div class="t r" style="left:349.00px;top:356.91px;width:39.00px;height:10.09px;padding-right:3px;"><span>2,69242</span></div>
<div class="t r" style="left:388.00px;top:356.91px;width:45.00px;height:10.09px;padding-right:3px;"><span>153.791</span></div>
<div class="t r" style="left:433.00px;top:356.91px;width:45.50px;height:10.09px;padding-right:3px;"><span>0,10701</span></div>
<div class="t c" style="left:478.50px;top:356.91px;width:24.00px;height:10.09px;"><span>1</span></div>
<div class="t c" style="left:535.50px;top:356.91px;width:45.00px;height:10.09px;"><span>69,00%</span></div>
<div class="t c" style="left:580.50px;top:356.91px;width:32.50px;height:10.09px;"><span>1</span></div>
<div class="t c" style="left:613.00px;top:356.91px;width:31.50px;height:10.09px;"><span>3</span></div>
<div class="t r" style="left:644.50px;top:356.91px;width:38.00px;height:10.09px;"><span>0,33333</span></div>
<div class="t c" style="left:722.00px;top:356.91px;width:35.50px;height:10.09px;"><span>3</span></div>
<div class="t c" style="left:757.50px;top:356.91px;width:36.50px;height:10.09px;"><span>0</span></div>
<div class="t r" style="left:794.00px;top:356.91px;width:25.50px;height:10.09px;padding-right:4.5px;"><span>-</span></div>
<div class="t c" style="left:819.50px;top:356.91px;width:38.00px;height:10.09px;"><span>1</span></div>
<div class="t r" style="left:857.50px;top:356.91px;width:38.50px;height:10.09px;"><span>5.306.479</span></div>
<div class="t r" style="left:896.00px;top:356.91px;width:32.50px;height:10.09px;"><span>15,48444</span></div>
<div class="t r" style="left:928.50px;top:356.91px;width:22.30px;height:10.09px;"><span>1</span></div>
<div class="t c" style="left:14.00px;top:367.00px;width:23.50px;height:16.30px;"><span>ADES</span></div>
<div class="t l wrap" style="left:37.50px;top:367.00px;width:85.00px;height:16.30px;"><span>Akasha Wira International Tbk<br>Tbk</span></div>
<div class="t c" style="left:122.50px;top:367.00px;width:31.50px;height:16.30px;"><span>2013</span></div>
<div class="t c" style="left:154.00px;top:367.00px;width:35.00px;height:16.30px;"><span>31/Dec/13</span></div>
<div class="t c" style="left:189.00px;top:367.00px;width:35.00px;height:16.30px;"><span>14/Mar/14</span></div>
<div class="t c" style="left:224.00px;top:367.00px;width:32.25px;height:16.30px;"><span>73</span></div>
<div class="t r" style="left:256.25px;top:367.00px;width:44.50px;height:16.30px;"><span>176.286</span></div>
<div class="t r" style="left:300.75px;top:367.00px;width:48.25px;height:16.30px;"><span>264.778</span></div>
<div class="t r" style="left:349.00px;top:367.00px;width:39.00px;height:16.30px;padding-right:3px;"><span>0,66579</span></div>
<div class="t r" style="left:388.00px;top:367.00px;width:45.00px;height:16.30px;padding-right:3px;"><span>55.656</span></div>
<div class="t r" style="left:433.00px;top:367.00px;width:45.50px;height:16.30px;padding-right:3px;"><span>0,21020</span></div>
<div class="t c" style="left:478.50px;top:367.00px;width:24.00px;height:16.30px;"><span>1</span></div>
<div class="t c" style="left:502.50px;top:367.00px;width:33.00px;height:16.30px;"><span>0</span></div>
<div class="t c" style="left:535.50px;top:367.00px;width:45.00px;height:16.30px;"><span>91,94%</span></div>
<div class="t c" style="left:580.50px;top:367.00px;width:32.50px;height:16.30px;"><span>1</span></div>
<div class="t c" style="left:613.00px;top:367.00px;width:31.50px;height:16.30px;"><span>4</span></div>
<div class="t r" style="left:644.50px;top:367.00px;width:38.00px;height:16.30px;"><span>0,25000</span></div>
<div class="t c" style="left:682.50px;top:367.00px;width:39.50px;height:16.30px;"><span>2</span></div>
<div class="t c" style="left:722.00px;top:367.00px;width:35.50px;height:16.30px;"><span>3</span></div>
<div class="t c" style="left:757.50px;top:367.00px;width:36.50px;height:16.30px;"><span>0</span></div>
<div class="t r" style="left:794.00px;top:367.00px;width:25.50px;height:16.30px;padding-right:4.5px;"><span>-</span></div>
<div class="t c" style="left:819.50px;top:367.00px;width:38.00px;height:16.30px;"><span>12</span></div>
<div class="t r" style="left:857.50px;top:367.00px;width:38.50px;height:16.30px;"><span>441.064</span></div>
<div class="t r" style="left:896.00px;top:367.00px;width:32.50px;height:16.30px;"><span>12,99695</span></div>
<div class="t r" style="left:928.50px;top:367.00px;width:22.30px;height:16.30px;"><span>0</span></div>
<div class="t c" style="left:14.00px;top:383.30px;width:23.50px;height:10.27px;"><span>ADES</span></div>
<div class="t c" style="left:122.50px;top:383.30px;width:31.50px;height:10.27px;"><span>2014</span></div>
<div class="t c" style="left:154.00px;top:383.30px;width:35.00px;height:10.27px;"><span>31/Dec/14</span></div>
<div class="t c" style="left:189.00px;top:383.30px;width:35.00px;height:10.27px;"><span>30/Mar/15</span></div>
<div class="t c" style="left:224.00px;top:383.30px;width:32.25px;height:10.27px;"><span>89</span></div>
<div class="t r" style="left:256.25px;top:383.30px;width:44.50px;height:10.27px;"><span>209.066</span></div>
<div class="t r" style="left:300.75px;top:383.30px;width:48.25px;height:10.27px;"><span>295.799</span></div>
<div class="t r" style="left:349.00px;top:383.30px;width:39.00px;height:10.27px;padding-right:3px;"><span>0,70678</span></div>
<div class="t r" style="left:388.00px;top:383.30px;width:45.00px;height:10.27px;padding-right:3px;"><span>31.021</span></div>
<div class="t r" style="left:433.00px;top:383.30px;width:45.50px;height:10.27px;padding-right:3px;"><span>0,10487</span></div>
<div class="t c" style="left:478.50px;top:383.30px;width:24.00px;height:10.27px;"><span>1</span></div>
<div class="t c" style="left:502.50px;top:383.30px;width:33.00px;height:10.27px;"><span>0</span></div>
<div class="t c" style="left:535.50px;top:383.30px;width:45.00px;height:10.27px;"><span>91,94%</span></div>
<div class="t c" style="left:580.50px;top:383.30px;width:32.50px;height:10.27px;"><span>1</span></div>
<div class="t c" style="left:613.00px;top:383.30px;width:31.50px;height:10.27px;"><span>4</span></div>
<div class="t r" style="left:644.50px;top:383.30px;width:38.00px;height:10.27px;"><span>0,25000</span></div>
<div class="t c" style="left:682.50px;top:383.30px;width:39.50px;height:10.27px;"><span>2</span></div>
<div class="t c" style="left:722.00px;top:383.30px;width:35.50px;height:10.27px;"><span>3</span></div>
<div class="t c" style="left:757.50px;top:383.30px;width:36.50px;height:10.27px;"><span>0</span></div>
<div class="t r" style="left:794.00px;top:383.30px;width:25.50px;height:10.27px;padding-right:4.5px;"><span>-</span></div>
<div class="t c" style="left:819.50px;top:383.30px;width:38.00px;height:10.27px;"><span>3</span></div>
<div class="t r" style="left:857.50px;top:383.30px;width:38.50px;height:10.27px;"><span>504.865</span></div>
<div class="t r" style="left:896.00px;top:383.30px;width:32.50px;height:10.27px;"><span>13,13205</span></div>
<div class="t r" style="left:928.50px;top:383.30px;width:22.30px;height:10.27px;"><span>0</span></div>
<div class="t c" style="left:14.00px;top:393.57px;width:23.50px;height:10.27px;"><span>ADES</span></div>
<div class="t c" style="left:122.50px;top:393.57px;width:31.50px;height:10.27px;"><span>2015</span></div>
<div class="t c" style="left:154.00px;top:393.57px;width:35.00px;height:10.27px;"><span>31/Dec/15</span></div>
<div class="t c" style="left:189.00px;top:393.57px;width:35.00px;height:10.27px;"><span>28/Mar/16</span></div>
<div class="t c" style="left:224.00px;top:393.57px;width:32.25px;height:10.27px;"><span>88</span></div>
<div class="t r" style="left:256.25px;top:393.57px;width:44.50px;height:10.27px;"><span>324.855</span></div>
<div class="t r" style="left:300.75px;top:393.57px;width:48.25px;height:10.27px;"><span>328.369</span></div>
<div class="t r" style="left:349.00px;top:393.57px;width:39.00px;height:10.27px;padding-right:3px;"><span>0,98930</span></div>
<div class="t r" style="left:388.00px;top:393.57px;width:45.00px;height:10.27px;padding-right:3px;"><span>32.839</span></div>
<div class="t r" style="left:433.00px;top:393.57px;width:45.50px;height:10.27px;padding-right:3px;"><span>0,10001</span></div>
<div class="t c" style="left:478.50px;top:393.57px;width:24.00px;height:10.27px;"><span>1</span></div>
<div class="t c" style="left:502.50px;top:393.57px;width:33.00px;height:10.27px;"><span>0</span></div>
<div class="t c" style="left:535.50px;top:393.57px;width:45.00px;height:10.27px;"><span>91,94%</span></div>
<div class="t c" style="left:580.50px;top:393.57px;width:32.50px;height:10.27px;"><span>1</span></div>
<div class="t c" style="left:613.00px;top:393.57px;width:31.50px;height:10.27px;"><span>4</span></div>
<div class="t r" style="left:644.50px;top:393.57px;width:38.00px;height:10.27px;"><span>0,25000</span></div>
<div class="t c" style="left:682.50px;top:393.57px;width:39.50px;height:10.27px;"><span>3</span></div>
<div class="t c" style="left:722.00px;top:393.57px;width:35.50px;height:10.27px;"><span>3</span></div>
<div class="t c" style="left:757.50px;top:393.57px;width:36.50px;height:10.27px;"><span>0</span></div>
<div class="t r" style="left:794.00px;top:393.57px;width:25.50px;height:10.27px;padding-right:4.5px;"><span>-</span></div>
<div class="t c" style="left:819.50px;top:393.57px;width:38.00px;height:10.27px;"><span>3</span></div>
<div class="t r" style="left:857.50px;top:393.57px;width:38.50px;height:10.27px;"><span>653.224</span></div>
<div class="t r" style="left:896.00px;top:393.57px;width:32.50px;height:10.27px;"><span>13,38968</span></div>
<div class="t r" style="left:928.50px;top:393.57px;width:22.30px;height:10.27px;"><span>0</span></div>
<div class="t c" style="left:14.00px;top:403.84px;width:23.50px;height:10.27px;"><span>ADES</span></div>
<div class="t c" style="left:122.50px;top:403.84px;width:31.50px;height:10.27px;"><span>2016</span></div>
<div class="t c" style="left:154.00px;top:403.84px;width:35.00px;height:10.27px;"><span>31/Dec/16</span></div>
<div class="t c" style="left:189.00px;top:403.84px;width:35.00px;height:10.27px;"><span>24/Mar/17</span></div>
<div class="t c" style="left:224.00px;top:403.84px;width:32.25px;height:10.27px;"><span>83</span></div>
<div class="t r" style="left:300.75px;top:403.84px;width:48.25px;height:10.27px;"><span>384.388</span></div>
<div class="t r" style="left:349.00px;top:403.84px;width:39.00px;height:10.27px;padding-right:4.5px;"><span>-</span></div>
<div class="t r" style="left:388.00px;top:403.84px;width:45.00px;height:10.27px;padding-right:3px;"><span>55.951</span></div>
<div class="t r" style="left:433.00px;top:403.84px;width:45.50px;height:10.27px;padding-right:3px;"><span>0,14556</span></div>
<div class="t c" style="left:478.50px;top:403.84px;width:24.00px;height:10.27px;"><span>1</span></div>
<div class="t c" style="left:502.50px;top:403.84px;width:33.00px;height:10.27px;"><span>0</span></div>
<div class="t c" style="left:535.50px;top:403.84px;width:45.00px;height:10.27px;"><span>91,52%</span></div>
<div class="t c" style="left:580.50px;top:403.84px;width:32.50px;height:10.27px;"><span>1</span></div>
<div class="t c" style="left:613.00px;top:403.84px;width:31.50px;height:10.27px;"><span>4</span></div>
<div class="t r" style="left:644.50px;top:403.84px;width:38.00px;height:10.27px;"><span>0,25000</span></div>
<div class="t c" style="left:682.50px;top:403.84px;width:39.50px;height:10.27px;"><span>3</span></div>
<div class="t c" style="left:722.00px;top:403.84px;width:35.50px;height:10.27px;"><span>3</span></div>
<div class="t c" style="left:757.50px;top:403.84px;width:36.50px;height:10.27px;"><span>0</span></div>
<div class="t r" style="left:794.00px;top:403.84px;width:25.50px;height:10.27px;padding-right:4.5px;"><span>-</span></div>
<div class="t c" style="left:819.50px;top:403.84px;width:38.00px;height:10.27px;"><span>2</span></div>
<div class="t r" style="left:857.50px;top:403.84px;width:38.50px;height:10.27px;"><span>767.479</span></div>
<div class="t r" style="left:896.00px;top:403.84px;width:32.50px;height:10.27px;"><span>13,55087</span></div>
<div class="t r" style="left:928.50px;top:403.84px;width:22.30px;height:10.27px;"><span>0</span></div>
<div class="t c" style="left:14.00px;top:414.11px;width:23.50px;height:10.27px;"><span>ADES</span></div>
<div class="t c" style="left:122.50px;top:414.11px;width:31.50px;height:10.27px;"><span>2017</span></div>
<div class="t c" style="left:154.00px;top:414.11px;width:35.00px;height:10.27px;"><span>31/Dec/17</span></div>
<div class="t c" style="left:189.00px;top:414.11px;width:35.00px;height:10.27px;"><span>23/Mar/18</span></div>
<div class="t c" style="left:224.00px;top:414.11px;width:32.25px;height:10.27px;"><span>82</span></div>
<div class="t r" style="left:256.25px;top:414.11px;width:44.50px;height:10.27px;"><span>417.225</span></div>
<div class="t r" style="left:300.75px;top:414.11px;width:48.25px;height:10.27px;"><span>423.011</span></div>
<div class="t r" style="left:349.00px;top:414.11px;width:39.00px;height:10.27px;padding-right:3px;"><span>0,98632</span></div>
<div class="t r" style="left:388.00px;top:414.11px;width:45.00px;height:10.27px;padding-right:3px;"><span>38.242</span></div>
<div class="t r" style="left:433.00px;top:414.11px;width:45.50px;height:10.27px;padding-right:3px;"><span>0,09040</span></div>
<div class="t c" style="left:478.50px;top:414.11px;width:24.00px;height:10.27px;"><span>1</span></div>
<div class="t c" style="left:580.50px;top:414.11px;width:32.50px;height:10.27px;"><span>1</span></div>
<div class="t c" style="left:613.00px;top:414.11px;width:31.50px;height:10.27px;"><span>4</span></div>
<div class="t r" style="left:644.50px;top:414.11px;width:38.00px;height:10.27px;"><span>0,25000</span></div>
<div class="t c" style="left:722.00px;top:414.11px;width:35.50px;height:10.27px;"><span>3</span></div>
<div class="t c" style="left:757.50px;top:414.11px;width:36.50px;height:10.27px;"><span>0</span></div>
<div class="t r" style="left:794.00px;top:414.11px;width:25.50px;height:10.27px;padding-right:4.5px;"><span>-</span></div>
<div class="t c" style="left:819.50px;top:414.11px;width:38.00px;height:10.27px;"><span>4</span></div>
<div class="t r" style="left:857.50px;top:414.11px;width:38.50px;height:10.27px;"><span>840.236</span></div>
<div class="t r" style="left:896.00px;top:414.11px;width:32.50px;height:10.27px;"><span>13,64144</span></div>
<div class="t r" style="left:928.50px;top:414.11px;width:22.30px;height:10.27px;"><span>0</span></div>
<div class="t c" style="left:14.00px;top:424.38px;width:23.50px;height:10.27px;"><span>ADHI</span></div>
<div class="t l" style="left:37.50px;top:424.38px;width:85.00px;height:10.27px;"><span>Adhi Karya (Persero) Tbk</span></div>
<div class="t c" style="left:122.50px;top:424.38px;width:31.50px;height:10.27px;"><span>2013</span></div>
<div class="t c" style="left:154.00px;top:424.38px;width:35.00px;height:10.27px;"><span>31/Dec/13</span></div>
<div class="t c" style="left:189.00px;top:424.38px;width:35.00px;height:10.27px;"><span>05/Feb/14</span></div>
<div class="t c" style="left:224.00px;top:424.38px;width:32.25px;height:10.27px;"><span>36</span></div>
<div class="t r" style="left:256.25px;top:424.38px;width:44.50px;height:10.27px;"><span>8.172.498</span></div>
<div class="t r" style="left:300.75px;top:424.38px;width:48.25px;height:10.27px;"><span>1.548.462</span></div>
<div class="t r" style="left:349.00px;top:424.38px;width:39.00px;height:10.27px;padding-right:3px;"><span>5,27782</span></div>
<div class="t r" style="left:388.00px;top:424.38px;width:45.00px;height:10.27px;padding-right:3px;"><span>408.861</span></div>
<div class="t r" style="left:433.00px;top:424.38px;width:45.50px;height:10.27px;padding-right:3px;"><span>0,26469</span></div>
<div class="t c" style="left:478.50px;top:424.38px;width:24.00px;height:10.27px;"><span>1</span></div>
<div class="t c" style="left:502.50px;top:424.38px;width:33.00px;height:10.27px;"><span>3</span></div>
<div class="t c" style="left:535.50px;top:424.38px;width:45.00px;height:10.27px;"><span>51,00%</span></div>
<div class="t c" style="left:580.50px;top:424.38px;width:32.50px;height:10.27px;"><span>0</span></div>
<div class="t c" style="left:613.00px;top:424.38px;width:31.50px;height:10.27px;"><span>5</span></div>
<div class="t r" style="left:644.50px;top:424.38px;width:38.00px;height:10.27px;padding-right:4.5px;"><span>-</span></div>
<div class="t c" style="left:682.50px;top:424.38px;width:39.50px;height:10.27px;"><span>2</span></div>
<div class="t c" style="left:722.00px;top:424.38px;width:35.50px;height:10.27px;"><span>3</span></div>
<div class="t c" style="left:757.50px;top:424.38px;width:36.50px;height:10.27px;"><span>0</span></div>
<div class="t r" style="left:794.00px;top:424.38px;width:25.50px;height:10.27px;padding-right:4.5px;"><span>-</span></div>
<div class="t c" style="left:819.50px;top:424.38px;width:38.00px;height:10.27px;"><span>4</span></div>
<div class="t r" style="left:857.50px;top:424.38px;width:38.50px;height:10.27px;"><span>9.720.962</span></div>
<div class="t r" style="left:896.00px;top:424.38px;width:32.50px;height:10.27px;"><span>16,08980</span></div>
<div class="t r" style="left:928.50px;top:424.38px;width:22.30px;height:10.27px;"><span>0</span></div>
<div class="tri" style="left:535.50px;top:114.75px"></div>
<div class="tri" style="left:535.50px;top:124.84px"></div>
<div class="tri" style="left:535.50px;top:165.20px"></div>
<div class="tri" style="left:535.50px;top:175.29px"></div>
<div class="tri" style="left:535.50px;top:215.65px"></div>
<div class="tri" style="left:535.50px;top:225.74px"></div>
<div class="tri" style="left:535.50px;top:266.10px"></div>
<div class="tri" style="left:535.50px;top:276.19px"></div>
<div class="tri" style="left:535.50px;top:367.00px"></div>
<div class="tri" style="left:535.50px;top:383.30px"></div>
<div class="tri" style="left:349.00px;top:256.01px"></div>
<div class="tri" style="left:349.00px;top:346.82px"></div>
<div class="tri" style="left:433.00px;top:346.82px"></div>
<div class="tri" style="left:896.00px;top:336.73px"></div>
<div class="tri" style="left:896.00px;top:346.82px"></div>
<div class="chbar" style="top:45.6px;height:9.5px;width:950.8px"></div>
<div class="corner" style="left:0.00px;top:45.60px;width:14.00px;height:9.50px;"><i></i></div>
<div class="ch" style="left:14.00px;top:45.60px;width:23.50px;height:9.50px;"><span>B</span></div>
<div class="ch" style="left:37.50px;top:45.60px;width:85.00px;height:9.50px;"><span>C</span></div>
<div class="ch" style="left:122.50px;top:45.60px;width:31.50px;height:9.50px;"><span>D</span></div>
<div class="ch" style="left:154.00px;top:45.60px;width:35.00px;height:9.50px;"><span>E</span></div>
<div class="ch sel" style="left:189.00px;top:45.60px;width:35.00px;height:9.50px;"><span>F</span></div>
<div class="ch" style="left:224.00px;top:45.60px;width:32.25px;height:9.50px;"><span>G</span></div>
<div class="ch" style="left:256.25px;top:45.60px;width:44.50px;height:9.50px;"><span>H</span></div>
<div class="ch" style="left:300.75px;top:45.60px;width:48.25px;height:9.50px;"><span>I</span></div>
<div class="ch" style="left:349.00px;top:45.60px;width:39.00px;height:9.50px;"><span>J</span></div>
<div class="ch" style="left:388.00px;top:45.60px;width:45.00px;height:9.50px;"><span>K</span></div>
<div class="ch" style="left:433.00px;top:45.60px;width:45.50px;height:9.50px;"><span>L</span></div>
<div class="ch" style="left:478.50px;top:45.60px;width:24.00px;height:9.50px;"><span>M</span></div>
<div class="ch" style="left:502.50px;top:45.60px;width:33.00px;height:9.50px;"><span>N</span></div>
<div class="ch" style="left:535.50px;top:45.60px;width:45.00px;height:9.50px;"><span>O</span></div>
<div class="ch" style="left:580.50px;top:45.60px;width:32.50px;height:9.50px;"><span>P</span></div>
<div class="ch" style="left:613.00px;top:45.60px;width:31.50px;height:9.50px;"><span>Q</span></div>
<div class="ch" style="left:644.50px;top:45.60px;width:38.00px;height:9.50px;"><span>R</span></div>
<div class="ch" style="left:682.50px;top:45.60px;width:39.50px;height:9.50px;"><span>S</span></div>
<div class="ch" style="left:722.00px;top:45.60px;width:35.50px;height:9.50px;"><span>T</span></div>
<div class="ch" style="left:757.50px;top:45.60px;width:36.50px;height:9.50px;"><span>U</span></div>
<div class="ch" style="left:794.00px;top:45.60px;width:25.50px;height:9.50px;"><span>V</span></div>
<div class="ch" style="left:819.50px;top:45.60px;width:38.00px;height:9.50px;"><span>W</span></div>
<div class="ch" style="left:857.50px;top:45.60px;width:38.50px;height:9.50px;"><span>X</span></div>
<div class="ch" style="left:896.00px;top:45.60px;width:32.50px;height:9.50px;"><span>Y</span></div>
<div class="ch" style="left:928.50px;top:45.60px;width:36.50px;height:9.50px;"><span>Z</span></div>
<div class="rh" style="left:0.00px;top:55.10px;width:14.00px;height:10.30px;"><span>1</span></div>
<div class="rh" style="left:0.00px;top:65.40px;width:14.00px;height:10.10px;"><span>2</span></div>
<div class="rh" style="left:0.00px;top:75.50px;width:14.00px;height:9.90px;"><span>3</span></div>
<div class="rh" style="left:0.00px;top:85.40px;width:14.00px;height:29.35px;"><span>4</span></div>
<div class="rh" style="left:0.00px;top:114.75px;width:14.00px;height:10.09px;"><span>5</span></div>
<div class="rh" style="left:0.00px;top:124.84px;width:14.00px;height:10.09px;"><span>6</span></div>
<div class="rh" style="left:0.00px;top:134.93px;width:14.00px;height:10.09px;"><span>7</span></div>
<div class="rh" style="left:0.00px;top:145.02px;width:14.00px;height:10.09px;"><span>8</span></div>
<div class="rh" style="left:0.00px;top:155.11px;width:14.00px;height:10.09px;"><span>9</span></div>
<div class="rh" style="left:0.00px;top:165.20px;width:14.00px;height:10.09px;"><span>10</span></div>
<div class="rh" style="left:0.00px;top:175.29px;width:14.00px;height:10.09px;"><span>11</span></div>
<div class="rh" style="left:0.00px;top:185.38px;width:14.00px;height:10.09px;"><span>12</span></div>
<div class="rh" style="left:0.00px;top:195.47px;width:14.00px;height:10.09px;"><span>13</span></div>
<div class="rh" style="left:0.00px;top:205.56px;width:14.00px;height:10.09px;"><span>14</span></div>
<div class="rh" style="left:0.00px;top:215.65px;width:14.00px;height:10.09px;"><span>15</span></div>
<div class="rh" style="left:0.00px;top:225.74px;width:14.00px;height:10.09px;"><span>16</span></div>
<div class="rh" style="left:0.00px;top:235.83px;width:14.00px;height:10.09px;"><span>17</span></div>
<div class="rh" style="left:0.00px;top:245.92px;width:14.00px;height:10.09px;"><span>18</span></div>
<div class="rh" style="left:0.00px;top:256.01px;width:14.00px;height:10.09px;"><span>19</span></div>
<div class="rh" style="left:0.00px;top:266.10px;width:14.00px;height:10.09px;"><span>20</span></div>
<div class="rh" style="left:0.00px;top:276.19px;width:14.00px;height:10.09px;"><span>21</span></div>
<div class="rh" style="left:0.00px;top:286.28px;width:14.00px;height:10.09px;"><span>22</span></div>
<div class="rh" style="left:0.00px;top:296.37px;width:14.00px;height:10.09px;"><span>23</span></div>
<div class="rh" style="left:0.00px;top:306.46px;width:14.00px;height:10.09px;"><span>24</span></div>
<div class="rh" style="left:0.00px;top:316.55px;width:14.00px;height:10.09px;"><span>25</span></div>
<div class="rh" style="left:0.00px;top:326.64px;width:14.00px;height:10.09px;"><span>26</span></div>
<div class="rh" style="left:0.00px;top:336.73px;width:14.00px;height:10.09px;"><span>27</span></div>
<div class="rh" style="left:0.00px;top:346.82px;width:14.00px;height:10.09px;"><span>28</span></div>
<div class="rh" style="left:0.00px;top:356.91px;width:14.00px;height:10.09px;"><span>29</span></div>
<div class="rh" style="left:0.00px;top:367.00px;width:14.00px;height:16.30px;"><span>30</span></div>
<div class="rh" style="left:0.00px;top:383.30px;width:14.00px;height:10.27px;"><span>31</span></div>
<div class="rh" style="left:0.00px;top:393.57px;width:14.00px;height:10.27px;"><span>32</span></div>
<div class="rh" style="left:0.00px;top:403.84px;width:14.00px;height:10.27px;"><span>33</span></div>
<div class="rh" style="left:0.00px;top:414.11px;width:14.00px;height:10.27px;"><span>34</span></div>
<div class="rh" style="left:0.00px;top:424.38px;width:14.00px;height:10.27px;"><span>35</span></div>
<div class="sb" style="left:950.80px;top:45.60px;width:9.20px;height:386.40px;background:linear-gradient(90deg,#8aa9da,#7fa1d5 40%,#7b9dd2);"></div>
<div class="sb" style="left:950.80px;top:45.60px;width:9.20px;height:9.80px;background:#9ab6e0;"><i></i></div>
<div class="sb" style="left:951.40px;top:56.40px;width:8.20px;height:4.60px;background:linear-gradient(#ffffff,#dfe7f3);border:1px solid #6f86ad;box-sizing:border-box;border-radius:1px"></div>
</div>
</div>
</body></html>
